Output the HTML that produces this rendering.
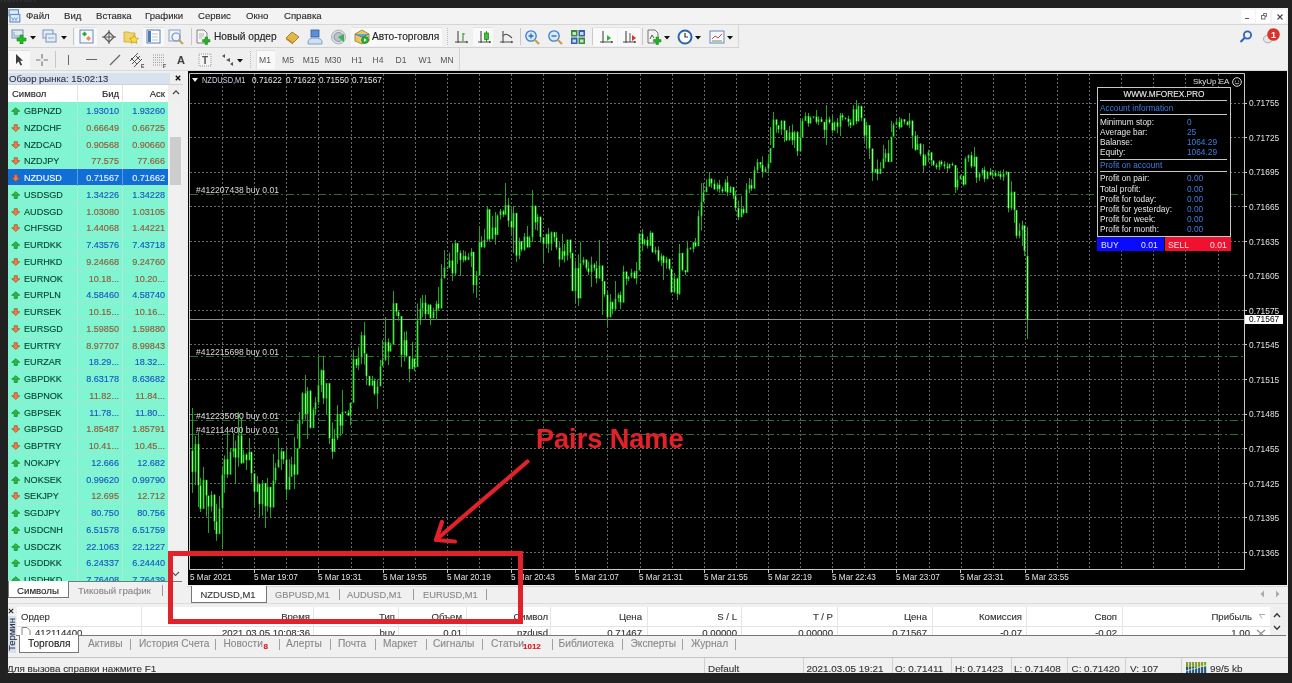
<!DOCTYPE html><html><head><meta charset="utf-8"><style>
html,body{margin:0;padding:0;}
body{width:1292px;height:683px;overflow:hidden;position:relative;background:#212121;font-family:"Liberation Sans", sans-serif;}
.t{position:absolute;white-space:nowrap;line-height:1;-webkit-text-stroke:0.12px currentColor;}
.b{position:absolute;}
</style></head><body><div style="position:absolute;left:0;top:0;width:1292px;height:683px;overflow:hidden;will-change:transform"><div class="t" style="left:0px;top:-6.66px;font-size:11px;color:#383838;">Контол</div><div class="b" style="left:8px;top:8px;width:1280px;height:665px;background:#f0f0f0"></div><div class="b" style="left:8px;top:8px;width:1280px;height:16px;background:#f3f3f3"></div><div class="b" style="left:8px;top:24px;width:1280px;height:1px;background:#d6d6d6"></div><svg class="b" style="left:8px;top:9px;" width="13" height="14" viewBox="0 0 13 14"><rect x="1" y="0.8" width="9.5" height="6" fill="#d6ecfb" stroke="#6d8fc8" stroke-width="1.2"/><rect x="2" y="5.5" width="9.8" height="7.5" fill="#d9f0ff" stroke="#6d8fc8" stroke-width="1.2"/><path d="M3.5 8L5 11.5L6.5 8.5L8 11.5L9.5 8" stroke="#7b9ad0" fill="none" stroke-width="0.9"/></svg><div class="t" style="left:26px;top:11.41px;font-size:9.6px;color:#2b2b2b;">Файл</div><div class="t" style="left:64px;top:11.41px;font-size:9.6px;color:#2b2b2b;">Вид</div><div class="t" style="left:96px;top:11.41px;font-size:9.6px;color:#2b2b2b;">Вставка</div><div class="t" style="left:145px;top:11.41px;font-size:9.6px;color:#2b2b2b;">Графики</div><div class="t" style="left:198px;top:11.41px;font-size:9.6px;color:#2b2b2b;">Сервис</div><div class="t" style="left:246px;top:11.41px;font-size:9.6px;color:#2b2b2b;">Окно</div><div class="t" style="left:284px;top:11.41px;font-size:9.6px;color:#2b2b2b;">Справка</div><div class="b" style="left:1241px;top:10px;width:14px;height:13px;background:#ffffff"></div><div class="b" style="left:1256px;top:10px;width:14px;height:13px;background:#ffffff"></div><div class="b" style="left:1272px;top:10px;width:14px;height:13px;background:#ffffff"></div><div class="b" style="left:1245px;top:18px;width:4px;height:1px;background:#555"></div><svg class="b" style="left:1260px;top:12px;" width="8" height="8" viewBox="0 0 8 8"><rect x="1.5" y="3.5" width="3.5" height="3.5" fill="none" stroke="#666" stroke-width="0.9"/><path d="M3.5 3.5 V1.5 H6.5 V4.5 H5" fill="none" stroke="#666" stroke-width="0.9"/></svg><svg class="b" style="left:1276px;top:13px;" width="8" height="8" viewBox="0 0 8 8"><path d="M1.5 1.5 L6.5 6.5 M6.5 1.5 L1.5 6.5" stroke="#444" stroke-width="1.1"/></svg><div class="b" style="left:8px;top:25px;width:1280px;height:22px;background:#f0f0f0"></div><div class="b" style="left:8px;top:47px;width:731px;height:1px;background:#d2d2d2"></div><div class="b" style="left:75px;top:27px;width:22px;height:19px;background:#f9f9f9;border-top:1px solid #e2e2e2;box-sizing:border-box"></div><div class="b" style="left:143px;top:27px;width:21px;height:19px;background:#f9f9f9;border-top:1px solid #e2e2e2;box-sizing:border-box"></div><div class="b" style="left:351px;top:27px;width:91px;height:19px;background:#f9f9f9;border-top:1px solid #e2e2e2;box-sizing:border-box"></div><div class="b" style="left:473px;top:27px;width:20px;height:19px;background:#f9f9f9;border-top:1px solid #e2e2e2;box-sizing:border-box"></div><div class="b" style="left:593px;top:27px;width:24px;height:19px;background:#f9f9f9;border-top:1px solid #e2e2e2;box-sizing:border-box"></div><div class="b" style="left:618px;top:27px;width:22px;height:19px;background:#f9f9f9;border-top:1px solid #e2e2e2;box-sizing:border-box"></div><div class="b" style="left:73px;top:28px;width:1px;height:17px;background:#c8c8c8"></div><div class="b" style="left:191px;top:28px;width:1px;height:17px;background:#c8c8c8"></div><div class="b" style="left:520px;top:28px;width:1px;height:17px;background:#c8c8c8"></div><div class="b" style="left:592px;top:28px;width:1px;height:17px;background:#c8c8c8"></div><div class="b" style="left:642px;top:28px;width:1px;height:17px;background:#c8c8c8"></div><div class="b" style="left:447px;top:28px;width:1px;height:17px;background:repeating-linear-gradient(#bbb 0 1px,transparent 1px 2px)"></div><div class="b" style="left:738px;top:25px;width:1px;height:22px;background:#d8d8d8"></div><svg class="b" style="left:11px;top:29px;" width="16" height="15" viewBox="0 0 16 15"><rect x="1" y="1" width="11" height="8" fill="#dfeaf5" stroke="#6e8db5"/><path d="M3 3v4h6" stroke="#6e8db5" fill="none" stroke-width="0.8"/><path d="M9 6h3v3h3v3h-3v3h-3v-3H6V9h3z" fill="#22bb22" stroke="#138a13" stroke-width="0.6"/></svg><svg class="b" style="left:30px;top:36px;" width="6" height="4" viewBox="0 0 6 4"><path d="M0 0 H6 L3 3.5 Z" fill="#111"/></svg><svg class="b" style="left:42px;top:29px;" width="16" height="15" viewBox="0 0 16 15"><rect x="1" y="1" width="10" height="8" fill="#e4edf7" stroke="#7795bd"/><rect x="4" y="5" width="10" height="8" fill="#e4edf7" stroke="#7795bd"/><path d="M6 9h6" stroke="#7795bd" stroke-width="0.8"/></svg><svg class="b" style="left:61px;top:36px;" width="6" height="4" viewBox="0 0 6 4"><path d="M0 0 H6 L3 3.5 Z" fill="#111"/></svg><svg class="b" style="left:79px;top:29px;" width="15" height="15" viewBox="0 0 15 15"><rect x="1" y="1" width="13" height="13" fill="#f4f8fc" stroke="#6b8ab5"/><path d="M5.5 2.5l2.5 2.5-2.5 2.5-2.5-2.5z" fill="#2faa3a"/><path d="M9.5 7l2.5 2.5-2.5 2.5-2.5-2.5z" fill="#ef8a55"/></svg><svg class="b" style="left:101px;top:29px;" width="16" height="16" viewBox="0 0 16 16"><path d="M8 3L13 8L8 13L3 8Z" fill="none" stroke="#555" stroke-width="1.1" stroke-linejoin="round"/><path d="M8 1v14M1 8h14" stroke="#555" stroke-width="1"/></svg><svg class="b" style="left:123px;top:29px;" width="17" height="16" viewBox="0 0 17 16"><path d="M1 3h5l1 1h5v9H1z" fill="#f1d56a" stroke="#c9a630" stroke-width="0.8"/><path d="M11 6l1.5 3 3 .4-2.2 2 .6 3-2.9-1.5-2.9 1.5.6-3-2.2-2 3-.4z" fill="#f7df3d" stroke="#b99a1a" stroke-width="0.7"/></svg><svg class="b" style="left:146px;top:29px;" width="15" height="15" viewBox="0 0 15 15"><rect x="1" y="1" width="13" height="13" fill="#fff" stroke="#5d7fb0"/><rect x="2" y="2" width="3" height="11" fill="#4f79b8"/><path d="M6 5h6M6 8h6M6 11h6" stroke="#9ab" stroke-width="0.7"/></svg><svg class="b" style="left:168px;top:29px;" width="17" height="17" viewBox="0 0 17 17"><rect x="1" y="1" width="11" height="11" fill="#eef3f8" stroke="#8aa2c2"/><circle cx="8" cy="8" r="4" fill="none" stroke="#7b93b8" stroke-width="1.2"/><path d="M11 11l4 4" stroke="#c9a14a" stroke-width="2"/></svg><svg class="b" style="left:195px;top:29px;" width="17" height="16" viewBox="0 0 17 16"><path d="M2 1h7l3 3v10H2z" fill="#f6f6f6" stroke="#777" stroke-width="0.9"/><path d="M4 5h5M4 7h5M4 9h3" stroke="#999" stroke-width="0.7"/><path d="M10 8h2.5v2.5H15v2.5h-2.5V15.5H10V13H7.5v-2.5H10z" fill="#21b321" stroke="#128a12" stroke-width="0.5"/></svg><div class="t" style="left:214px;top:31.97px;font-size:10.2px;color:#222;">Новый ордер</div><svg class="b" style="left:284px;top:29px;" width="17" height="16" viewBox="0 0 17 16"><path d="M2 9l6-6 7 5-6 6z" fill="#e3b743" stroke="#a0772a" stroke-width="0.9"/><path d="M2 9l7 5v1.5L2 10.5z" fill="#b9892d"/></svg><svg class="b" style="left:307px;top:29px;" width="17" height="16" viewBox="0 0 17 16"><rect x="4" y="1" width="8" height="7" fill="#5b8fd6" stroke="#2e5aa0" stroke-width="0.8"/><path d="M1 13c0-3 3-4 7-4s7 1 7 4v2H1z" fill="#cfe0f3" stroke="#6b8fbf" stroke-width="0.8"/></svg><svg class="b" style="left:330px;top:29px;" width="17" height="16" viewBox="0 0 17 16"><circle cx="8.5" cy="8" r="7" fill="#d8dde2" stroke="#9aa4ad" stroke-width="0.8"/><circle cx="8.5" cy="8" r="4.5" fill="#b9c3cc" stroke="#7d8893" stroke-width="0.8"/><path d="M8 8l6-3v8z" fill="#3fae4f"/></svg><svg class="b" style="left:353px;top:28px;" width="17" height="17" viewBox="0 0 17 17"><path d="M2 6l7-4 7 4v7l-7 3-7-3z" fill="#e8c95a" stroke="#8a7a3a" stroke-width="0.8"/><path d="M2 6l7 3 7-3" fill="#6aa6de" stroke="#3e6fa8" stroke-width="0.8"/><circle cx="12" cy="12" r="3.5" fill="#26b33a" stroke="#117a1f" stroke-width="0.6"/><path d="M11 10.3v3.4l2.6-1.7z" fill="#fff"/></svg><div class="t" style="left:372px;top:31.57px;font-size:10.2px;color:#222;">Авто-торговля</div><svg class="b" style="left:453px;top:29px;" width="17" height="16" viewBox="0 0 17 16"><path d="M5 2v12M2 13h13" stroke="#4a4a4a" stroke-width="1.1" fill="none"/><path d="M15 13l-2-1.3v2.6z" fill="#4a4a4a"/><path d="M10 4v8M10 5h1.8" stroke="#2a9a2a" stroke-width="1.1"/></svg><svg class="b" style="left:476px;top:29px;" width="17" height="16" viewBox="0 0 17 16"><path d="M5 2v12M2 13h13" stroke="#4a4a4a" stroke-width="1.1" fill="none"/><path d="M15 13l-2-1.3v2.6z" fill="#4a4a4a"/><path d="M10.5 2v11" stroke="#1c6a1c" stroke-width="0.8"/><rect x="8.5" y="4" width="4" height="6.5" fill="#35c935" stroke="#1c7a1c" stroke-width="0.7"/></svg><svg class="b" style="left:498px;top:29px;" width="17" height="16" viewBox="0 0 17 16"><path d="M5 2v12M2 13h13" stroke="#4a4a4a" stroke-width="1.1" fill="none"/><path d="M15 13l-2-1.3v2.6z" fill="#4a4a4a"/><path d="M5 7 Q8 3 14 9" stroke="#555" stroke-width="1.1" fill="none"/></svg><svg class="b" style="left:524px;top:29px;" width="17" height="17" viewBox="0 0 17 17"><circle cx="7" cy="7" r="5.2" fill="#d9ecfb" stroke="#3b7ccc" stroke-width="1.3"/><path d="M4.5 7h5M7 4.5v5" stroke="#2f6fc0" stroke-width="1.4"/><path d="M10.5 10.5l4.5 4.5" stroke="#c9a14a" stroke-width="2.2"/></svg><svg class="b" style="left:547px;top:29px;" width="17" height="17" viewBox="0 0 17 17"><circle cx="7" cy="7" r="5.2" fill="#d9ecfb" stroke="#3b7ccc" stroke-width="1.3"/><path d="M4.5 7h5" stroke="#2f6fc0" stroke-width="1.4"/><path d="M10.5 10.5l4.5 4.5" stroke="#c9a14a" stroke-width="2.2"/></svg><svg class="b" style="left:570px;top:29px;" width="16" height="16" viewBox="0 0 16 16"><rect x="1" y="1" width="6.5" height="6.5" fill="#3a8a3a"/><rect x="8.5" y="1" width="6.5" height="6.5" fill="#2f5fb0"/><rect x="1" y="8.5" width="6.5" height="6.5" fill="#2f5fb0"/><rect x="8.5" y="8.5" width="6.5" height="6.5" fill="#3a8a3a"/><rect x="2.5" y="3" width="3.5" height="3" fill="#bfe8bf"/><rect x="10" y="3" width="3.5" height="3" fill="#c8d8f4"/><rect x="2.5" y="10.5" width="3.5" height="3" fill="#c8d8f4"/><rect x="10" y="10.5" width="3.5" height="3" fill="#bfe8bf"/></svg><svg class="b" style="left:598px;top:29px;" width="17" height="16" viewBox="0 0 17 16"><path d="M5 2v12M2 13h13" stroke="#4a4a4a" stroke-width="1.1" fill="none"/><path d="M15 13l-2-1.3v2.6z" fill="#4a4a4a"/><path d="M9 6l4 3-4 3z" fill="#2fb52f"/></svg><svg class="b" style="left:621px;top:29px;" width="17" height="16" viewBox="0 0 17 16"><path d="M5 2v12M2 13h13" stroke="#4a4a4a" stroke-width="1.1" fill="none"/><path d="M15 13l-2-1.3v2.6z" fill="#4a4a4a"/><path d="M9 4v9" stroke="#555"/><path d="M11 6l4 3-4 3z" fill="#d9302a"/></svg><svg class="b" style="left:646px;top:29px;" width="17" height="17" viewBox="0 0 17 17"><path d="M2 1h7l3 3v10H2z" fill="#f4f4f4" stroke="#666" stroke-width="0.9"/><path d="M4 10l2-4 2 3" stroke="#444" fill="none" stroke-width="0.9"/><path d="M10 8h2.5v2.5H15v2.5h-2.5V15.5H10V13H7.5v-2.5H10z" fill="#21b321" stroke="#128a12" stroke-width="0.5"/></svg><svg class="b" style="left:664px;top:36px;" width="6" height="4" viewBox="0 0 6 4"><path d="M0 0 H6 L3 3.5 Z" fill="#111"/></svg><svg class="b" style="left:677px;top:29px;" width="16" height="16" viewBox="0 0 16 16"><circle cx="8" cy="8" r="6.5" fill="#fff" stroke="#2c63b5" stroke-width="2"/><path d="M8 4v4h3" stroke="#333" stroke-width="1.2" fill="none"/></svg><svg class="b" style="left:695px;top:36px;" width="6" height="4" viewBox="0 0 6 4"><path d="M0 0 H6 L3 3.5 Z" fill="#111"/></svg><svg class="b" style="left:709px;top:29px;" width="17" height="16" viewBox="0 0 17 16"><rect x="1" y="2" width="14" height="12" fill="#f4f7fb" stroke="#6b88b0"/><path d="M3 10l3-3 3 2 4-4" stroke="#d9302a" fill="none" stroke-width="0.9"/><path d="M3 12h10" stroke="#3b8a3b" stroke-width="0.8"/></svg><svg class="b" style="left:727px;top:36px;" width="6" height="4" viewBox="0 0 6 4"><path d="M0 0 H6 L3 3.5 Z" fill="#111"/></svg><svg class="b" style="left:1238px;top:29px;" width="16" height="16" viewBox="0 0 16 16"><circle cx="9.5" cy="6" r="3.6" fill="none" stroke="#2e62c0" stroke-width="1.8"/><path d="M7 8.5L2.5 13" stroke="#2e62c0" stroke-width="2.2"/></svg><svg class="b" style="left:1259px;top:26px;" width="24" height="20" viewBox="0 0 24 20"><ellipse cx="9" cy="13" rx="4.5" ry="3.8" fill="#e8e8e8" stroke="#aaa" stroke-width="1"/><circle cx="14.5" cy="8.5" r="6.3" fill="#d9342b"/><text x="14.5" y="12" font-size="9" font-weight="bold" text-anchor="middle" fill="#fff" font-family="Liberation Sans">1</text></svg><div class="b" style="left:8px;top:48px;width:1280px;height:22px;background:#f0f0f0"></div><div class="b" style="left:8px;top:48px;width:451px;height:22px;background:#efefef"></div><div class="b" style="left:459px;top:48px;width:1px;height:22px;background:#d3d3d3"></div><div class="b" style="left:8px;top:70px;width:1280px;height:1px;background:#dadada"></div><div class="b" style="left:9px;top:50px;width:21px;height:19px;background:#f9f9f9;border-top:1px solid #e0e0e0;box-sizing:border-box"></div><div class="b" style="left:256px;top:50px;width:19px;height:19px;background:#f9f9f9;border-top:1px solid #e0e0e0;border-left:1px solid #e0e0e0;box-sizing:border-box"></div><div class="b" style="left:55px;top:51px;width:1px;height:17px;background:#c8c8c8"></div><div class="b" style="left:250px;top:51px;width:1px;height:17px;background:repeating-linear-gradient(#bbb 0 1px,transparent 1px 2px)"></div><svg class="b" style="left:13px;top:53px;" width="12" height="14" viewBox="0 0 12 14"><path d="M3 1v10l2.5-2.5 2 4 1.6-.8-2-4H10z" fill="#3c3c3c"/></svg><svg class="b" style="left:35px;top:53px;" width="14" height="14" viewBox="0 0 14 14"><path d="M7 1v4.5M7 8.5V13M1 7h4.5M8.5 7H13" stroke="#777" stroke-width="1.2"/></svg><div class="b" style="left:68px;top:55px;width:1.3px;height:10px;background:#666"></div><div class="b" style="left:86px;top:59px;width:11px;height:1.3px;background:#666"></div><svg class="b" style="left:108px;top:53px;" width="14" height="14" viewBox="0 0 14 14"><path d="M2 12L12 2" stroke="#666" stroke-width="1.3"/></svg><svg class="b" style="left:129px;top:52px;" width="16" height="16" viewBox="0 0 16 16"><path d="M1 9l8-8M3 12l8-8M5 15l8-8M2 6l6 6M6 3l5 5" stroke="#555" stroke-width="1"/><text x="12" y="16" font-size="5" fill="#444" font-family="Liberation Sans" font-weight="bold">E</text></svg><svg class="b" style="left:152px;top:52px;" width="16" height="16" viewBox="0 0 16 16"><path d="M1 3h12M1 5.5h12M1 8h12M1 10.5h12M1 13h9" stroke="#777" stroke-width="0.7" stroke-dasharray="1 1"/><text x="11" y="16" font-size="5" fill="#444" font-family="Liberation Sans" font-weight="bold">F</text></svg><div class="t" style="left:177px;top:55.05px;font-size:11px;color:#444;font-weight:bold">A</div><svg class="b" style="left:198px;top:53px;" width="15" height="15" viewBox="0 0 15 15"><rect x="1" y="1" width="12" height="12" fill="#f4f4f4" stroke="#999" stroke-dasharray="1 1"/><text x="7" y="11" font-size="10" text-anchor="middle" fill="#555" font-family="Liberation Sans" font-weight="bold">T</text></svg><svg class="b" style="left:220px;top:53px;" width="16" height="14" viewBox="0 0 16 14"><path d="M2 3l3-2v4zM6 7l4-2v4zM10 11l3-2v4z" fill="#555"/></svg><svg class="b" style="left:237px;top:59px;" width="6" height="4" viewBox="0 0 6 4"><path d="M0 0 H6 L3 3.5 Z" fill="#111"/></svg><div class="t" style="left:250px;width:30px;text-align:center;top:56px;font-size:8.6px;color:#555;-webkit-text-stroke:0">M1</div><div class="t" style="left:273px;width:30px;text-align:center;top:56px;font-size:8.6px;color:#555;-webkit-text-stroke:0">M5</div><div class="t" style="left:296px;width:30px;text-align:center;top:56px;font-size:8.6px;color:#555;-webkit-text-stroke:0">M15</div><div class="t" style="left:318px;width:30px;text-align:center;top:56px;font-size:8.6px;color:#555;-webkit-text-stroke:0">M30</div><div class="t" style="left:342px;width:30px;text-align:center;top:56px;font-size:8.6px;color:#555;-webkit-text-stroke:0">H1</div><div class="t" style="left:363px;width:30px;text-align:center;top:56px;font-size:8.6px;color:#555;-webkit-text-stroke:0">H4</div><div class="t" style="left:386px;width:30px;text-align:center;top:56px;font-size:8.6px;color:#555;-webkit-text-stroke:0">D1</div><div class="t" style="left:410px;width:30px;text-align:center;top:56px;font-size:8.6px;color:#555;-webkit-text-stroke:0">W1</div><div class="t" style="left:432px;width:30px;text-align:center;top:56px;font-size:8.6px;color:#555;-webkit-text-stroke:0">MN</div><div class="b" style="left:8px;top:71px;width:180px;height:511px;background:#efefef"></div><div class="b" style="left:8px;top:73px;width:162px;height:11px;background:#d7e2ee"></div><div class="b" style="left:8px;top:84px;width:175px;height:1px;background:#d2d2d2"></div><div class="t" style="left:9px;top:73.90px;font-size:9.5px;color:#334;">Обзор рынка: 15:02:13</div><svg class="b" style="left:175px;top:74.5px;" width="6" height="6" viewBox="0 0 6 6"><path d="M0.8 0.8L5.2 5.2M5.2 0.8L0.8 5.2" stroke="#111" stroke-width="1.4"/></svg><div class="b" style="left:8px;top:85px;width:160px;height:17px;background:#ffffff"></div><div class="b" style="left:77px;top:85px;width:1px;height:17px;background:#e6e6e6"></div><div class="b" style="left:122px;top:85px;width:1px;height:17px;background:#e6e6e6"></div><div class="t" style="left:12px;top:89.40px;font-size:9.5px;color:#222;">Символ</div><div class="t" style="right:1173px;top:89.40px;font-size:9.5px;color:#222;">Бид</div><div class="t" style="right:1127px;top:89.40px;font-size:9.5px;color:#222;">Аск</div><svg class="b" style="left:171.5px;top:88.5px;" width="8" height="6" viewBox="0 0 8 6"><path d="M1 5L4 1.8L7 5" stroke="#444" stroke-width="1.2" fill="none"/></svg><div class="b" style="left:8px;top:102px;width:160px;height:480px;overflow:hidden"><div class="b" style="left:0;top:0.00px;width:160px;height:16.75px;background:#7ff5d1"></div><div class="b" style="left:0;top:16.15px;width:160px;height:0.6px;background:#9fe8cf"></div><div class="b" style="left:69px;top:0.00px;width:1px;height:16.75px;background:#a9eedb"></div><div class="b" style="left:114px;top:0.00px;width:1px;height:16.75px;background:#a9eedb"></div><svg class="b" style="left:3px;top:5.20px" width="9.5" height="8.6" viewBox="0 0 11 10"><path d="M5.5 0.8L10.2 5H7.3V8.6H3.7V5H0.8z" fill="#36b443" stroke="#15801f" stroke-width="0.8" stroke-linejoin="round"/></svg><div class="t" style="left:16px;top:5.10px;font-size:9.1px;color:#083d2a">GBPNZD</div><div class="t" style="right:49px;top:5.10px;font-size:9.1px;color:#1a52c0">1.93010</div><div class="t" style="right:3px;top:5.10px;font-size:9.1px;color:#1a52c0">1.93260</div><div class="b" style="left:0;top:16.75px;width:160px;height:16.75px;background:#7ff5d1"></div><div class="b" style="left:0;top:32.90px;width:160px;height:0.6px;background:#9fe8cf"></div><div class="b" style="left:69px;top:16.75px;width:1px;height:16.75px;background:#a9eedb"></div><div class="b" style="left:114px;top:16.75px;width:1px;height:16.75px;background:#a9eedb"></div><svg class="b" style="left:3px;top:21.95px" width="9.5" height="8.6" viewBox="0 0 11 10"><path d="M5.5 8.6L10.2 4.4H7.3V0.8H3.7V4.4H0.8z" fill="#f07c48" stroke="#a8461c" stroke-width="0.8" stroke-linejoin="round"/></svg><div class="t" style="left:16px;top:21.85px;font-size:9.1px;color:#083d2a">NZDCHF</div><div class="t" style="right:49px;top:21.85px;font-size:9.1px;color:#935633">0.66649</div><div class="t" style="right:3px;top:21.85px;font-size:9.1px;color:#935633">0.66725</div><div class="b" style="left:0;top:33.50px;width:160px;height:16.75px;background:#7ff5d1"></div><div class="b" style="left:0;top:49.65px;width:160px;height:0.6px;background:#9fe8cf"></div><div class="b" style="left:69px;top:33.50px;width:1px;height:16.75px;background:#a9eedb"></div><div class="b" style="left:114px;top:33.50px;width:1px;height:16.75px;background:#a9eedb"></div><svg class="b" style="left:3px;top:38.70px" width="9.5" height="8.6" viewBox="0 0 11 10"><path d="M5.5 8.6L10.2 4.4H7.3V0.8H3.7V4.4H0.8z" fill="#f07c48" stroke="#a8461c" stroke-width="0.8" stroke-linejoin="round"/></svg><div class="t" style="left:16px;top:38.60px;font-size:9.1px;color:#083d2a">NZDCAD</div><div class="t" style="right:49px;top:38.60px;font-size:9.1px;color:#935633">0.90568</div><div class="t" style="right:3px;top:38.60px;font-size:9.1px;color:#935633">0.90660</div><div class="b" style="left:0;top:50.25px;width:160px;height:16.75px;background:#7ff5d1"></div><div class="b" style="left:0;top:66.40px;width:160px;height:0.6px;background:#9fe8cf"></div><div class="b" style="left:69px;top:50.25px;width:1px;height:16.75px;background:#a9eedb"></div><div class="b" style="left:114px;top:50.25px;width:1px;height:16.75px;background:#a9eedb"></div><svg class="b" style="left:3px;top:55.45px" width="9.5" height="8.6" viewBox="0 0 11 10"><path d="M5.5 8.6L10.2 4.4H7.3V0.8H3.7V4.4H0.8z" fill="#f07c48" stroke="#a8461c" stroke-width="0.8" stroke-linejoin="round"/></svg><div class="t" style="left:16px;top:55.35px;font-size:9.1px;color:#083d2a">NZDJPY</div><div class="t" style="right:49px;top:55.35px;font-size:9.1px;color:#935633">77.575</div><div class="t" style="right:3px;top:55.35px;font-size:9.1px;color:#935633">77.666</div><div class="b" style="left:0;top:67.00px;width:160px;height:16.75px;background:#0f6fd6"></div><div class="b" style="left:0;top:83.15px;width:160px;height:0.6px;background:#9fe8cf"></div><div class="b" style="left:69px;top:67.00px;width:1px;height:16.75px;background:#5a9ee6"></div><div class="b" style="left:114px;top:67.00px;width:1px;height:16.75px;background:#5a9ee6"></div><svg class="b" style="left:3px;top:72.20px" width="9.5" height="8.6" viewBox="0 0 11 10"><path d="M5.5 8.6L10.2 4.4H7.3V0.8H3.7V4.4H0.8z" fill="#f07c48" stroke="#a8461c" stroke-width="0.8" stroke-linejoin="round"/></svg><div class="t" style="left:16px;top:72.10px;font-size:9.1px;color:#ffffff">NZDUSD</div><div class="t" style="right:49px;top:72.10px;font-size:9.1px;color:#eaf2ff">0.71567</div><div class="t" style="right:3px;top:72.10px;font-size:9.1px;color:#eaf2ff">0.71662</div><div class="b" style="left:0;top:83.75px;width:160px;height:16.75px;background:#7ff5d1"></div><div class="b" style="left:0;top:99.90px;width:160px;height:0.6px;background:#9fe8cf"></div><div class="b" style="left:69px;top:83.75px;width:1px;height:16.75px;background:#a9eedb"></div><div class="b" style="left:114px;top:83.75px;width:1px;height:16.75px;background:#a9eedb"></div><svg class="b" style="left:3px;top:88.95px" width="9.5" height="8.6" viewBox="0 0 11 10"><path d="M5.5 0.8L10.2 5H7.3V8.6H3.7V5H0.8z" fill="#36b443" stroke="#15801f" stroke-width="0.8" stroke-linejoin="round"/></svg><div class="t" style="left:16px;top:88.85px;font-size:9.1px;color:#083d2a">USDSGD</div><div class="t" style="right:49px;top:88.85px;font-size:9.1px;color:#1a52c0">1.34226</div><div class="t" style="right:3px;top:88.85px;font-size:9.1px;color:#1a52c0">1.34228</div><div class="b" style="left:0;top:100.50px;width:160px;height:16.75px;background:#7ff5d1"></div><div class="b" style="left:0;top:116.65px;width:160px;height:0.6px;background:#9fe8cf"></div><div class="b" style="left:69px;top:100.50px;width:1px;height:16.75px;background:#a9eedb"></div><div class="b" style="left:114px;top:100.50px;width:1px;height:16.75px;background:#a9eedb"></div><svg class="b" style="left:3px;top:105.70px" width="9.5" height="8.6" viewBox="0 0 11 10"><path d="M5.5 8.6L10.2 4.4H7.3V0.8H3.7V4.4H0.8z" fill="#f07c48" stroke="#a8461c" stroke-width="0.8" stroke-linejoin="round"/></svg><div class="t" style="left:16px;top:105.60px;font-size:9.1px;color:#083d2a">AUDSGD</div><div class="t" style="right:49px;top:105.60px;font-size:9.1px;color:#935633">1.03080</div><div class="t" style="right:3px;top:105.60px;font-size:9.1px;color:#935633">1.03105</div><div class="b" style="left:0;top:117.25px;width:160px;height:16.75px;background:#7ff5d1"></div><div class="b" style="left:0;top:133.40px;width:160px;height:0.6px;background:#9fe8cf"></div><div class="b" style="left:69px;top:117.25px;width:1px;height:16.75px;background:#a9eedb"></div><div class="b" style="left:114px;top:117.25px;width:1px;height:16.75px;background:#a9eedb"></div><svg class="b" style="left:3px;top:122.45px" width="9.5" height="8.6" viewBox="0 0 11 10"><path d="M5.5 8.6L10.2 4.4H7.3V0.8H3.7V4.4H0.8z" fill="#f07c48" stroke="#a8461c" stroke-width="0.8" stroke-linejoin="round"/></svg><div class="t" style="left:16px;top:122.35px;font-size:9.1px;color:#083d2a">CHFSGD</div><div class="t" style="right:49px;top:122.35px;font-size:9.1px;color:#935633">1.44068</div><div class="t" style="right:3px;top:122.35px;font-size:9.1px;color:#935633">1.44221</div><div class="b" style="left:0;top:134.00px;width:160px;height:16.75px;background:#7ff5d1"></div><div class="b" style="left:0;top:150.15px;width:160px;height:0.6px;background:#9fe8cf"></div><div class="b" style="left:69px;top:134.00px;width:1px;height:16.75px;background:#a9eedb"></div><div class="b" style="left:114px;top:134.00px;width:1px;height:16.75px;background:#a9eedb"></div><svg class="b" style="left:3px;top:139.20px" width="9.5" height="8.6" viewBox="0 0 11 10"><path d="M5.5 0.8L10.2 5H7.3V8.6H3.7V5H0.8z" fill="#36b443" stroke="#15801f" stroke-width="0.8" stroke-linejoin="round"/></svg><div class="t" style="left:16px;top:139.10px;font-size:9.1px;color:#083d2a">EURDKK</div><div class="t" style="right:49px;top:139.10px;font-size:9.1px;color:#1a52c0">7.43576</div><div class="t" style="right:3px;top:139.10px;font-size:9.1px;color:#1a52c0">7.43718</div><div class="b" style="left:0;top:150.75px;width:160px;height:16.75px;background:#7ff5d1"></div><div class="b" style="left:0;top:166.90px;width:160px;height:0.6px;background:#9fe8cf"></div><div class="b" style="left:69px;top:150.75px;width:1px;height:16.75px;background:#a9eedb"></div><div class="b" style="left:114px;top:150.75px;width:1px;height:16.75px;background:#a9eedb"></div><svg class="b" style="left:3px;top:155.95px" width="9.5" height="8.6" viewBox="0 0 11 10"><path d="M5.5 8.6L10.2 4.4H7.3V0.8H3.7V4.4H0.8z" fill="#f07c48" stroke="#a8461c" stroke-width="0.8" stroke-linejoin="round"/></svg><div class="t" style="left:16px;top:155.85px;font-size:9.1px;color:#083d2a">EURHKD</div><div class="t" style="right:49px;top:155.85px;font-size:9.1px;color:#935633">9.24668</div><div class="t" style="right:3px;top:155.85px;font-size:9.1px;color:#935633">9.24760</div><div class="b" style="left:0;top:167.50px;width:160px;height:16.75px;background:#7ff5d1"></div><div class="b" style="left:0;top:183.65px;width:160px;height:0.6px;background:#9fe8cf"></div><div class="b" style="left:69px;top:167.50px;width:1px;height:16.75px;background:#a9eedb"></div><div class="b" style="left:114px;top:167.50px;width:1px;height:16.75px;background:#a9eedb"></div><svg class="b" style="left:3px;top:172.70px" width="9.5" height="8.6" viewBox="0 0 11 10"><path d="M5.5 8.6L10.2 4.4H7.3V0.8H3.7V4.4H0.8z" fill="#f07c48" stroke="#a8461c" stroke-width="0.8" stroke-linejoin="round"/></svg><div class="t" style="left:16px;top:172.60px;font-size:9.1px;color:#083d2a">EURNOK</div><div class="t" style="right:49px;top:172.60px;font-size:9.1px;color:#935633">10.18...</div><div class="t" style="right:3px;top:172.60px;font-size:9.1px;color:#935633">10.20...</div><div class="b" style="left:0;top:184.25px;width:160px;height:16.75px;background:#7ff5d1"></div><div class="b" style="left:0;top:200.40px;width:160px;height:0.6px;background:#9fe8cf"></div><div class="b" style="left:69px;top:184.25px;width:1px;height:16.75px;background:#a9eedb"></div><div class="b" style="left:114px;top:184.25px;width:1px;height:16.75px;background:#a9eedb"></div><svg class="b" style="left:3px;top:189.45px" width="9.5" height="8.6" viewBox="0 0 11 10"><path d="M5.5 0.8L10.2 5H7.3V8.6H3.7V5H0.8z" fill="#36b443" stroke="#15801f" stroke-width="0.8" stroke-linejoin="round"/></svg><div class="t" style="left:16px;top:189.35px;font-size:9.1px;color:#083d2a">EURPLN</div><div class="t" style="right:49px;top:189.35px;font-size:9.1px;color:#1a52c0">4.58460</div><div class="t" style="right:3px;top:189.35px;font-size:9.1px;color:#1a52c0">4.58740</div><div class="b" style="left:0;top:201.00px;width:160px;height:16.75px;background:#7ff5d1"></div><div class="b" style="left:0;top:217.15px;width:160px;height:0.6px;background:#9fe8cf"></div><div class="b" style="left:69px;top:201.00px;width:1px;height:16.75px;background:#a9eedb"></div><div class="b" style="left:114px;top:201.00px;width:1px;height:16.75px;background:#a9eedb"></div><svg class="b" style="left:3px;top:206.20px" width="9.5" height="8.6" viewBox="0 0 11 10"><path d="M5.5 8.6L10.2 4.4H7.3V0.8H3.7V4.4H0.8z" fill="#f07c48" stroke="#a8461c" stroke-width="0.8" stroke-linejoin="round"/></svg><div class="t" style="left:16px;top:206.10px;font-size:9.1px;color:#083d2a">EURSEK</div><div class="t" style="right:49px;top:206.10px;font-size:9.1px;color:#935633">10.15...</div><div class="t" style="right:3px;top:206.10px;font-size:9.1px;color:#935633">10.16...</div><div class="b" style="left:0;top:217.75px;width:160px;height:16.75px;background:#7ff5d1"></div><div class="b" style="left:0;top:233.90px;width:160px;height:0.6px;background:#9fe8cf"></div><div class="b" style="left:69px;top:217.75px;width:1px;height:16.75px;background:#a9eedb"></div><div class="b" style="left:114px;top:217.75px;width:1px;height:16.75px;background:#a9eedb"></div><svg class="b" style="left:3px;top:222.95px" width="9.5" height="8.6" viewBox="0 0 11 10"><path d="M5.5 8.6L10.2 4.4H7.3V0.8H3.7V4.4H0.8z" fill="#f07c48" stroke="#a8461c" stroke-width="0.8" stroke-linejoin="round"/></svg><div class="t" style="left:16px;top:222.85px;font-size:9.1px;color:#083d2a">EURSGD</div><div class="t" style="right:49px;top:222.85px;font-size:9.1px;color:#935633">1.59850</div><div class="t" style="right:3px;top:222.85px;font-size:9.1px;color:#935633">1.59880</div><div class="b" style="left:0;top:234.50px;width:160px;height:16.75px;background:#7ff5d1"></div><div class="b" style="left:0;top:250.65px;width:160px;height:0.6px;background:#9fe8cf"></div><div class="b" style="left:69px;top:234.50px;width:1px;height:16.75px;background:#a9eedb"></div><div class="b" style="left:114px;top:234.50px;width:1px;height:16.75px;background:#a9eedb"></div><svg class="b" style="left:3px;top:239.70px" width="9.5" height="8.6" viewBox="0 0 11 10"><path d="M5.5 8.6L10.2 4.4H7.3V0.8H3.7V4.4H0.8z" fill="#f07c48" stroke="#a8461c" stroke-width="0.8" stroke-linejoin="round"/></svg><div class="t" style="left:16px;top:239.60px;font-size:9.1px;color:#083d2a">EURTRY</div><div class="t" style="right:49px;top:239.60px;font-size:9.1px;color:#935633">8.97707</div><div class="t" style="right:3px;top:239.60px;font-size:9.1px;color:#935633">8.99843</div><div class="b" style="left:0;top:251.25px;width:160px;height:16.75px;background:#7ff5d1"></div><div class="b" style="left:0;top:267.40px;width:160px;height:0.6px;background:#9fe8cf"></div><div class="b" style="left:69px;top:251.25px;width:1px;height:16.75px;background:#a9eedb"></div><div class="b" style="left:114px;top:251.25px;width:1px;height:16.75px;background:#a9eedb"></div><svg class="b" style="left:3px;top:256.45px" width="9.5" height="8.6" viewBox="0 0 11 10"><path d="M5.5 0.8L10.2 5H7.3V8.6H3.7V5H0.8z" fill="#36b443" stroke="#15801f" stroke-width="0.8" stroke-linejoin="round"/></svg><div class="t" style="left:16px;top:256.35px;font-size:9.1px;color:#083d2a">EURZAR</div><div class="t" style="right:49px;top:256.35px;font-size:9.1px;color:#1a52c0">18.29...</div><div class="t" style="right:3px;top:256.35px;font-size:9.1px;color:#1a52c0">18.32...</div><div class="b" style="left:0;top:268.00px;width:160px;height:16.75px;background:#7ff5d1"></div><div class="b" style="left:0;top:284.15px;width:160px;height:0.6px;background:#9fe8cf"></div><div class="b" style="left:69px;top:268.00px;width:1px;height:16.75px;background:#a9eedb"></div><div class="b" style="left:114px;top:268.00px;width:1px;height:16.75px;background:#a9eedb"></div><svg class="b" style="left:3px;top:273.20px" width="9.5" height="8.6" viewBox="0 0 11 10"><path d="M5.5 0.8L10.2 5H7.3V8.6H3.7V5H0.8z" fill="#36b443" stroke="#15801f" stroke-width="0.8" stroke-linejoin="round"/></svg><div class="t" style="left:16px;top:273.10px;font-size:9.1px;color:#083d2a">GBPDKK</div><div class="t" style="right:49px;top:273.10px;font-size:9.1px;color:#1a52c0">8.63178</div><div class="t" style="right:3px;top:273.10px;font-size:9.1px;color:#1a52c0">8.63682</div><div class="b" style="left:0;top:284.75px;width:160px;height:16.75px;background:#7ff5d1"></div><div class="b" style="left:0;top:300.90px;width:160px;height:0.6px;background:#9fe8cf"></div><div class="b" style="left:69px;top:284.75px;width:1px;height:16.75px;background:#a9eedb"></div><div class="b" style="left:114px;top:284.75px;width:1px;height:16.75px;background:#a9eedb"></div><svg class="b" style="left:3px;top:289.95px" width="9.5" height="8.6" viewBox="0 0 11 10"><path d="M5.5 8.6L10.2 4.4H7.3V0.8H3.7V4.4H0.8z" fill="#f07c48" stroke="#a8461c" stroke-width="0.8" stroke-linejoin="round"/></svg><div class="t" style="left:16px;top:289.85px;font-size:9.1px;color:#083d2a">GBPNOK</div><div class="t" style="right:49px;top:289.85px;font-size:9.1px;color:#935633">11.82...</div><div class="t" style="right:3px;top:289.85px;font-size:9.1px;color:#935633">11.84...</div><div class="b" style="left:0;top:301.50px;width:160px;height:16.75px;background:#7ff5d1"></div><div class="b" style="left:0;top:317.65px;width:160px;height:0.6px;background:#9fe8cf"></div><div class="b" style="left:69px;top:301.50px;width:1px;height:16.75px;background:#a9eedb"></div><div class="b" style="left:114px;top:301.50px;width:1px;height:16.75px;background:#a9eedb"></div><svg class="b" style="left:3px;top:306.70px" width="9.5" height="8.6" viewBox="0 0 11 10"><path d="M5.5 0.8L10.2 5H7.3V8.6H3.7V5H0.8z" fill="#36b443" stroke="#15801f" stroke-width="0.8" stroke-linejoin="round"/></svg><div class="t" style="left:16px;top:306.60px;font-size:9.1px;color:#083d2a">GBPSEK</div><div class="t" style="right:49px;top:306.60px;font-size:9.1px;color:#1a52c0">11.78...</div><div class="t" style="right:3px;top:306.60px;font-size:9.1px;color:#1a52c0">11.80...</div><div class="b" style="left:0;top:318.25px;width:160px;height:16.75px;background:#7ff5d1"></div><div class="b" style="left:0;top:334.40px;width:160px;height:0.6px;background:#9fe8cf"></div><div class="b" style="left:69px;top:318.25px;width:1px;height:16.75px;background:#a9eedb"></div><div class="b" style="left:114px;top:318.25px;width:1px;height:16.75px;background:#a9eedb"></div><svg class="b" style="left:3px;top:323.45px" width="9.5" height="8.6" viewBox="0 0 11 10"><path d="M5.5 8.6L10.2 4.4H7.3V0.8H3.7V4.4H0.8z" fill="#f07c48" stroke="#a8461c" stroke-width="0.8" stroke-linejoin="round"/></svg><div class="t" style="left:16px;top:323.35px;font-size:9.1px;color:#083d2a">GBPSGD</div><div class="t" style="right:49px;top:323.35px;font-size:9.1px;color:#935633">1.85487</div><div class="t" style="right:3px;top:323.35px;font-size:9.1px;color:#935633">1.85791</div><div class="b" style="left:0;top:335.00px;width:160px;height:16.75px;background:#7ff5d1"></div><div class="b" style="left:0;top:351.15px;width:160px;height:0.6px;background:#9fe8cf"></div><div class="b" style="left:69px;top:335.00px;width:1px;height:16.75px;background:#a9eedb"></div><div class="b" style="left:114px;top:335.00px;width:1px;height:16.75px;background:#a9eedb"></div><svg class="b" style="left:3px;top:340.20px" width="9.5" height="8.6" viewBox="0 0 11 10"><path d="M5.5 8.6L10.2 4.4H7.3V0.8H3.7V4.4H0.8z" fill="#f07c48" stroke="#a8461c" stroke-width="0.8" stroke-linejoin="round"/></svg><div class="t" style="left:16px;top:340.10px;font-size:9.1px;color:#083d2a">GBPTRY</div><div class="t" style="right:49px;top:340.10px;font-size:9.1px;color:#935633">10.41...</div><div class="t" style="right:3px;top:340.10px;font-size:9.1px;color:#935633">10.45...</div><div class="b" style="left:0;top:351.75px;width:160px;height:16.75px;background:#7ff5d1"></div><div class="b" style="left:0;top:367.90px;width:160px;height:0.6px;background:#9fe8cf"></div><div class="b" style="left:69px;top:351.75px;width:1px;height:16.75px;background:#a9eedb"></div><div class="b" style="left:114px;top:351.75px;width:1px;height:16.75px;background:#a9eedb"></div><svg class="b" style="left:3px;top:356.95px" width="9.5" height="8.6" viewBox="0 0 11 10"><path d="M5.5 0.8L10.2 5H7.3V8.6H3.7V5H0.8z" fill="#36b443" stroke="#15801f" stroke-width="0.8" stroke-linejoin="round"/></svg><div class="t" style="left:16px;top:356.85px;font-size:9.1px;color:#083d2a">NOKJPY</div><div class="t" style="right:49px;top:356.85px;font-size:9.1px;color:#1a52c0">12.666</div><div class="t" style="right:3px;top:356.85px;font-size:9.1px;color:#1a52c0">12.682</div><div class="b" style="left:0;top:368.50px;width:160px;height:16.75px;background:#7ff5d1"></div><div class="b" style="left:0;top:384.65px;width:160px;height:0.6px;background:#9fe8cf"></div><div class="b" style="left:69px;top:368.50px;width:1px;height:16.75px;background:#a9eedb"></div><div class="b" style="left:114px;top:368.50px;width:1px;height:16.75px;background:#a9eedb"></div><svg class="b" style="left:3px;top:373.70px" width="9.5" height="8.6" viewBox="0 0 11 10"><path d="M5.5 0.8L10.2 5H7.3V8.6H3.7V5H0.8z" fill="#36b443" stroke="#15801f" stroke-width="0.8" stroke-linejoin="round"/></svg><div class="t" style="left:16px;top:373.60px;font-size:9.1px;color:#083d2a">NOKSEK</div><div class="t" style="right:49px;top:373.60px;font-size:9.1px;color:#1a52c0">0.99620</div><div class="t" style="right:3px;top:373.60px;font-size:9.1px;color:#1a52c0">0.99790</div><div class="b" style="left:0;top:385.25px;width:160px;height:16.75px;background:#7ff5d1"></div><div class="b" style="left:0;top:401.40px;width:160px;height:0.6px;background:#9fe8cf"></div><div class="b" style="left:69px;top:385.25px;width:1px;height:16.75px;background:#a9eedb"></div><div class="b" style="left:114px;top:385.25px;width:1px;height:16.75px;background:#a9eedb"></div><svg class="b" style="left:3px;top:390.45px" width="9.5" height="8.6" viewBox="0 0 11 10"><path d="M5.5 8.6L10.2 4.4H7.3V0.8H3.7V4.4H0.8z" fill="#f07c48" stroke="#a8461c" stroke-width="0.8" stroke-linejoin="round"/></svg><div class="t" style="left:16px;top:390.35px;font-size:9.1px;color:#083d2a">SEKJPY</div><div class="t" style="right:49px;top:390.35px;font-size:9.1px;color:#935633">12.695</div><div class="t" style="right:3px;top:390.35px;font-size:9.1px;color:#935633">12.712</div><div class="b" style="left:0;top:402.00px;width:160px;height:16.75px;background:#7ff5d1"></div><div class="b" style="left:0;top:418.15px;width:160px;height:0.6px;background:#9fe8cf"></div><div class="b" style="left:69px;top:402.00px;width:1px;height:16.75px;background:#a9eedb"></div><div class="b" style="left:114px;top:402.00px;width:1px;height:16.75px;background:#a9eedb"></div><svg class="b" style="left:3px;top:407.20px" width="9.5" height="8.6" viewBox="0 0 11 10"><path d="M5.5 0.8L10.2 5H7.3V8.6H3.7V5H0.8z" fill="#36b443" stroke="#15801f" stroke-width="0.8" stroke-linejoin="round"/></svg><div class="t" style="left:16px;top:407.10px;font-size:9.1px;color:#083d2a">SGDJPY</div><div class="t" style="right:49px;top:407.10px;font-size:9.1px;color:#1a52c0">80.750</div><div class="t" style="right:3px;top:407.10px;font-size:9.1px;color:#1a52c0">80.756</div><div class="b" style="left:0;top:418.75px;width:160px;height:16.75px;background:#7ff5d1"></div><div class="b" style="left:0;top:434.90px;width:160px;height:0.6px;background:#9fe8cf"></div><div class="b" style="left:69px;top:418.75px;width:1px;height:16.75px;background:#a9eedb"></div><div class="b" style="left:114px;top:418.75px;width:1px;height:16.75px;background:#a9eedb"></div><svg class="b" style="left:3px;top:423.95px" width="9.5" height="8.6" viewBox="0 0 11 10"><path d="M5.5 0.8L10.2 5H7.3V8.6H3.7V5H0.8z" fill="#36b443" stroke="#15801f" stroke-width="0.8" stroke-linejoin="round"/></svg><div class="t" style="left:16px;top:423.85px;font-size:9.1px;color:#083d2a">USDCNH</div><div class="t" style="right:49px;top:423.85px;font-size:9.1px;color:#1a52c0">6.51578</div><div class="t" style="right:3px;top:423.85px;font-size:9.1px;color:#1a52c0">6.51759</div><div class="b" style="left:0;top:435.50px;width:160px;height:16.75px;background:#7ff5d1"></div><div class="b" style="left:0;top:451.65px;width:160px;height:0.6px;background:#9fe8cf"></div><div class="b" style="left:69px;top:435.50px;width:1px;height:16.75px;background:#a9eedb"></div><div class="b" style="left:114px;top:435.50px;width:1px;height:16.75px;background:#a9eedb"></div><svg class="b" style="left:3px;top:440.70px" width="9.5" height="8.6" viewBox="0 0 11 10"><path d="M5.5 0.8L10.2 5H7.3V8.6H3.7V5H0.8z" fill="#36b443" stroke="#15801f" stroke-width="0.8" stroke-linejoin="round"/></svg><div class="t" style="left:16px;top:440.60px;font-size:9.1px;color:#083d2a">USDCZK</div><div class="t" style="right:49px;top:440.60px;font-size:9.1px;color:#1a52c0">22.1063</div><div class="t" style="right:3px;top:440.60px;font-size:9.1px;color:#1a52c0">22.1227</div><div class="b" style="left:0;top:452.25px;width:160px;height:16.75px;background:#7ff5d1"></div><div class="b" style="left:0;top:468.40px;width:160px;height:0.6px;background:#9fe8cf"></div><div class="b" style="left:69px;top:452.25px;width:1px;height:16.75px;background:#a9eedb"></div><div class="b" style="left:114px;top:452.25px;width:1px;height:16.75px;background:#a9eedb"></div><svg class="b" style="left:3px;top:457.45px" width="9.5" height="8.6" viewBox="0 0 11 10"><path d="M5.5 0.8L10.2 5H7.3V8.6H3.7V5H0.8z" fill="#36b443" stroke="#15801f" stroke-width="0.8" stroke-linejoin="round"/></svg><div class="t" style="left:16px;top:457.35px;font-size:9.1px;color:#083d2a">USDDKK</div><div class="t" style="right:49px;top:457.35px;font-size:9.1px;color:#1a52c0">6.24337</div><div class="t" style="right:3px;top:457.35px;font-size:9.1px;color:#1a52c0">6.24440</div><div class="b" style="left:0;top:469.00px;width:160px;height:16.75px;background:#7ff5d1"></div><div class="b" style="left:0;top:485.15px;width:160px;height:0.6px;background:#9fe8cf"></div><div class="b" style="left:69px;top:469.00px;width:1px;height:16.75px;background:#a9eedb"></div><div class="b" style="left:114px;top:469.00px;width:1px;height:16.75px;background:#a9eedb"></div><svg class="b" style="left:3px;top:474.20px" width="9.5" height="8.6" viewBox="0 0 11 10"><path d="M5.5 0.8L10.2 5H7.3V8.6H3.7V5H0.8z" fill="#36b443" stroke="#15801f" stroke-width="0.8" stroke-linejoin="round"/></svg><div class="t" style="left:16px;top:474.10px;font-size:9.1px;color:#083d2a">USDHKD</div><div class="t" style="right:49px;top:474.10px;font-size:9.1px;color:#1a52c0">7.76408</div><div class="t" style="right:3px;top:474.10px;font-size:9.1px;color:#1a52c0">7.76439</div></div><div class="b" style="left:168px;top:102px;width:14px;height:480px;background:#f0f0f0"></div><div class="b" style="left:170px;top:137px;width:11px;height:48px;background:#cdcdcd"></div><svg class="b" style="left:171px;top:571px;" width="9" height="6" viewBox="0 0 9 6"><path d="M1 1L4.5 4.5L8 1" stroke="#555" stroke-width="1.1" fill="none"/></svg><div class="b" style="left:8px;top:582px;width:174px;height:18px;background:#f0f0f0"></div><div class="b" style="left:8px;top:581px;width:174px;height:1px;background:#777"></div><div class="b" style="left:8px;top:581px;width:61px;height:17px;background:#ffffff;border:1px solid #777;border-top:none;box-sizing:border-box"></div><div class="t" style="left:17px;top:585.72px;font-size:9.7px;color:#222;">Символы</div><div class="t" style="left:78px;top:585.72px;font-size:9.7px;color:#888;">Тиковый график</div><div class="b" style="left:162px;top:585px;width:1px;height:11px;background:#999"></div><div class="b" style="left:188px;top:71px;width:1098.5px;height:513.5px;background:#000"></div><svg class="b" style="left:0;top:0" width="1292" height="683" viewBox="0 0 1292 683"><line x1="222.5" y1="74" x2="222.5" y2="569" stroke="#686868" stroke-dasharray="2 2"/><line x1="254.5" y1="74" x2="254.5" y2="569" stroke="#686868" stroke-dasharray="2 2"/><line x1="286.5" y1="74" x2="286.5" y2="569" stroke="#686868" stroke-dasharray="2 2"/><line x1="318.5" y1="74" x2="318.5" y2="569" stroke="#686868" stroke-dasharray="2 2"/><line x1="351.5" y1="74" x2="351.5" y2="569" stroke="#686868" stroke-dasharray="2 2"/><line x1="383.5" y1="74" x2="383.5" y2="569" stroke="#686868" stroke-dasharray="2 2"/><line x1="415.5" y1="74" x2="415.5" y2="569" stroke="#686868" stroke-dasharray="2 2"/><line x1="447.5" y1="74" x2="447.5" y2="569" stroke="#686868" stroke-dasharray="2 2"/><line x1="479.5" y1="74" x2="479.5" y2="569" stroke="#686868" stroke-dasharray="2 2"/><line x1="511.5" y1="74" x2="511.5" y2="569" stroke="#686868" stroke-dasharray="2 2"/><line x1="543.5" y1="74" x2="543.5" y2="569" stroke="#686868" stroke-dasharray="2 2"/><line x1="575.5" y1="74" x2="575.5" y2="569" stroke="#686868" stroke-dasharray="2 2"/><line x1="607.5" y1="74" x2="607.5" y2="569" stroke="#686868" stroke-dasharray="2 2"/><line x1="640.5" y1="74" x2="640.5" y2="569" stroke="#686868" stroke-dasharray="2 2"/><line x1="672.5" y1="74" x2="672.5" y2="569" stroke="#686868" stroke-dasharray="2 2"/><line x1="704.5" y1="74" x2="704.5" y2="569" stroke="#686868" stroke-dasharray="2 2"/><line x1="736.5" y1="74" x2="736.5" y2="569" stroke="#686868" stroke-dasharray="2 2"/><line x1="768.5" y1="74" x2="768.5" y2="569" stroke="#686868" stroke-dasharray="2 2"/><line x1="800.5" y1="74" x2="800.5" y2="569" stroke="#686868" stroke-dasharray="2 2"/><line x1="832.5" y1="74" x2="832.5" y2="569" stroke="#686868" stroke-dasharray="2 2"/><line x1="864.5" y1="74" x2="864.5" y2="569" stroke="#686868" stroke-dasharray="2 2"/><line x1="896.5" y1="74" x2="896.5" y2="569" stroke="#686868" stroke-dasharray="2 2"/><line x1="929.5" y1="74" x2="929.5" y2="569" stroke="#686868" stroke-dasharray="2 2"/><line x1="961.5" y1="74" x2="961.5" y2="569" stroke="#686868" stroke-dasharray="2 2"/><line x1="993.5" y1="74" x2="993.5" y2="569" stroke="#686868" stroke-dasharray="2 2"/><line x1="1025.5" y1="74" x2="1025.5" y2="569" stroke="#686868" stroke-dasharray="2 2"/><line x1="1057.5" y1="74" x2="1057.5" y2="569" stroke="#686868" stroke-dasharray="2 2"/><line x1="1089.5" y1="74" x2="1089.5" y2="569" stroke="#686868" stroke-dasharray="2 2"/><line x1="1121.5" y1="74" x2="1121.5" y2="569" stroke="#686868" stroke-dasharray="2 2"/><line x1="1153.5" y1="74" x2="1153.5" y2="569" stroke="#686868" stroke-dasharray="2 2"/><line x1="1185.5" y1="74" x2="1185.5" y2="569" stroke="#686868" stroke-dasharray="2 2"/><line x1="1218.5" y1="74" x2="1218.5" y2="569" stroke="#686868" stroke-dasharray="2 2"/><line x1="190" y1="103.5" x2="1244" y2="103.5" stroke="#686868" stroke-dasharray="2 2"/><line x1="190" y1="137.5" x2="1244" y2="137.5" stroke="#686868" stroke-dasharray="2 2"/><line x1="190" y1="172.5" x2="1244" y2="172.5" stroke="#686868" stroke-dasharray="2 2"/><line x1="190" y1="206.5" x2="1244" y2="206.5" stroke="#686868" stroke-dasharray="2 2"/><line x1="190" y1="241.5" x2="1244" y2="241.5" stroke="#686868" stroke-dasharray="2 2"/><line x1="190" y1="275.5" x2="1244" y2="275.5" stroke="#686868" stroke-dasharray="2 2"/><line x1="190" y1="310.5" x2="1244" y2="310.5" stroke="#686868" stroke-dasharray="2 2"/><line x1="190" y1="344.5" x2="1244" y2="344.5" stroke="#686868" stroke-dasharray="2 2"/><line x1="190" y1="379.5" x2="1244" y2="379.5" stroke="#686868" stroke-dasharray="2 2"/><line x1="190" y1="414.5" x2="1244" y2="414.5" stroke="#686868" stroke-dasharray="2 2"/><line x1="190" y1="448.5" x2="1244" y2="448.5" stroke="#686868" stroke-dasharray="2 2"/><line x1="190" y1="483.5" x2="1244" y2="483.5" stroke="#686868" stroke-dasharray="2 2"/><line x1="190" y1="517.5" x2="1244" y2="517.5" stroke="#686868" stroke-dasharray="2 2"/><line x1="190" y1="552.5" x2="1244" y2="552.5" stroke="#686868" stroke-dasharray="2 2"/><line x1="190" y1="194.5" x2="1244" y2="194.5" stroke="#2c6e2c" stroke-dasharray="8 3 2 3"/><line x1="190" y1="356.5" x2="1244" y2="356.5" stroke="#2c6e2c" stroke-dasharray="8 3 2 3"/><line x1="190" y1="420.5" x2="1244" y2="420.5" stroke="#2c6e2c" stroke-dasharray="8 3 2 3"/><line x1="190" y1="434.5" x2="1244" y2="434.5" stroke="#2c6e2c" stroke-dasharray="8 3 2 3"/><line x1="190" y1="319.5" x2="1244" y2="319.5" stroke="#8c8c8c" stroke-width="1"/><path d="M189.5 73.5 H1244.5 V569.5 H189.5 Z" fill="none" stroke="#c8c8c8" stroke-width="1"/><rect x="192" y="408.0" width="1" height="85.0" fill="#22a622"/><rect x="191.5" y="450.5" width="2" height="21.6" fill="#1ec41e"/><rect x="192" y="451.0" width="1" height="20.6" fill="#86ff78"/><rect x="195" y="435.9" width="1" height="49.2" fill="#22a622"/><rect x="194.5" y="443.9" width="2" height="28.2" fill="#19a819"/><rect x="195" y="444.4" width="1" height="27.2" fill="#4ae04a"/><rect x="198" y="433.0" width="1" height="74.0" fill="#22a622"/><rect x="197.5" y="443.9" width="2" height="41.5" fill="#1ec41e"/><rect x="198" y="444.4" width="1" height="40.5" fill="#86ff78"/><rect x="200" y="477.7" width="1" height="34.3" fill="#22a622"/><rect x="199.5" y="485.4" width="2" height="23.5" fill="#1ec41e"/><rect x="200" y="485.9" width="1" height="22.5" fill="#86ff78"/><rect x="203" y="467.0" width="1" height="41.9" fill="#22a622"/><rect x="202.5" y="479.8" width="2" height="29.1" fill="#19a819"/><rect x="203" y="480.3" width="1" height="28.1" fill="#4ae04a"/><rect x="206" y="485.0" width="1" height="31.4" fill="#22a622"/><rect x="205.5" y="479.8" width="2" height="15.8" fill="#1ec41e"/><rect x="206" y="480.3" width="1" height="14.8" fill="#86ff78"/><rect x="208" y="495.6" width="1" height="37.4" fill="#22a622"/><rect x="207.5" y="495.6" width="2" height="11.1" fill="#1ec41e"/><rect x="208" y="496.1" width="1" height="10.1" fill="#86ff78"/><rect x="211" y="491.0" width="1" height="20.6" fill="#22a622"/><rect x="210.5" y="494.6" width="2" height="12.2" fill="#19a819"/><rect x="211" y="495.1" width="1" height="11.2" fill="#4ae04a"/><rect x="214" y="494.1" width="1" height="35.9" fill="#22a622"/><rect x="213.5" y="494.6" width="2" height="26.8" fill="#1ec41e"/><rect x="214" y="495.1" width="1" height="25.8" fill="#86ff78"/><rect x="216" y="503.8" width="1" height="37.0" fill="#22a622"/><rect x="215.5" y="521.4" width="2" height="12.7" fill="#1ec41e"/><rect x="216" y="521.9" width="1" height="11.7" fill="#86ff78"/><rect x="219" y="495.8" width="1" height="38.2" fill="#22a622"/><rect x="218.5" y="508.4" width="2" height="25.7" fill="#19a819"/><rect x="219" y="508.9" width="1" height="24.7" fill="#4ae04a"/><rect x="222" y="467.0" width="1" height="82.0" fill="#22a622"/><rect x="221.5" y="474.6" width="2" height="33.8" fill="#19a819"/><rect x="222" y="475.1" width="1" height="32.8" fill="#4ae04a"/><rect x="224" y="455.5" width="1" height="37.5" fill="#22a622"/><rect x="223.5" y="459.1" width="2" height="15.5" fill="#19a819"/><rect x="224" y="459.6" width="1" height="14.5" fill="#4ae04a"/><rect x="227" y="433.0" width="1" height="45.0" fill="#22a622"/><rect x="226.5" y="459.1" width="2" height="15.6" fill="#1ec41e"/><rect x="227" y="459.6" width="1" height="14.6" fill="#86ff78"/><rect x="230" y="447.9" width="1" height="19.1" fill="#22a622"/><rect x="229.5" y="451.8" width="2" height="22.9" fill="#19a819"/><rect x="230" y="452.3" width="1" height="21.9" fill="#4ae04a"/><rect x="233" y="433.0" width="1" height="24.2" fill="#22a622"/><rect x="232.5" y="448.0" width="2" height="3.8" fill="#19a819"/><rect x="233" y="448.5" width="1" height="2.8" fill="#4ae04a"/><rect x="235" y="440.5" width="1" height="42.5" fill="#22a622"/><rect x="234.5" y="448.0" width="2" height="9.8" fill="#1ec41e"/><rect x="235" y="448.5" width="1" height="8.8" fill="#86ff78"/><rect x="238" y="412.0" width="1" height="54.7" fill="#22a622"/><rect x="237.5" y="435.3" width="2" height="22.5" fill="#19a819"/><rect x="238" y="435.8" width="1" height="21.5" fill="#4ae04a"/><rect x="241" y="417.9" width="1" height="46.0" fill="#22a622"/><rect x="240.5" y="435.3" width="2" height="27.9" fill="#1ec41e"/><rect x="241" y="435.8" width="1" height="26.9" fill="#86ff78"/><rect x="243" y="449.8" width="1" height="13.5" fill="#22a622"/><rect x="242.5" y="454.4" width="2" height="8.8" fill="#19a819"/><rect x="243" y="454.9" width="1" height="7.8" fill="#4ae04a"/><rect x="246" y="453.4" width="1" height="16.6" fill="#22a622"/><rect x="245.5" y="454.4" width="2" height="5.9" fill="#1ec41e"/><rect x="246" y="454.9" width="1" height="4.9" fill="#86ff78"/><rect x="249" y="438.0" width="1" height="22.3" fill="#22a622"/><rect x="248.5" y="451.7" width="2" height="8.6" fill="#19a819"/><rect x="249" y="452.2" width="1" height="7.6" fill="#4ae04a"/><rect x="251" y="459.0" width="1" height="23.1" fill="#22a622"/><rect x="250.5" y="451.7" width="2" height="21.7" fill="#1ec41e"/><rect x="251" y="452.2" width="1" height="20.7" fill="#86ff78"/><rect x="254" y="473.4" width="1" height="33.6" fill="#22a622"/><rect x="253.5" y="473.4" width="2" height="18.5" fill="#1ec41e"/><rect x="254" y="473.9" width="1" height="17.5" fill="#86ff78"/><rect x="257" y="476.1" width="1" height="15.9" fill="#22a622"/><rect x="256.5" y="483.9" width="2" height="8.0" fill="#19a819"/><rect x="257" y="484.4" width="1" height="7.0" fill="#4ae04a"/><rect x="259" y="483.9" width="1" height="33.9" fill="#22a622"/><rect x="258.5" y="483.9" width="2" height="20.3" fill="#1ec41e"/><rect x="259" y="484.4" width="1" height="19.3" fill="#86ff78"/><rect x="262" y="480.0" width="1" height="35.8" fill="#22a622"/><rect x="261.5" y="483.0" width="2" height="21.2" fill="#19a819"/><rect x="262" y="483.5" width="1" height="20.2" fill="#4ae04a"/><rect x="265" y="483.0" width="1" height="45.0" fill="#22a622"/><rect x="264.5" y="483.0" width="2" height="23.4" fill="#1ec41e"/><rect x="265" y="483.5" width="1" height="22.4" fill="#86ff78"/><rect x="267" y="478.0" width="1" height="33.7" fill="#22a622"/><rect x="266.5" y="486.8" width="2" height="19.6" fill="#19a819"/><rect x="267" y="487.3" width="1" height="18.6" fill="#4ae04a"/><rect x="270" y="486.8" width="1" height="30.2" fill="#22a622"/><rect x="269.5" y="486.8" width="2" height="20.8" fill="#1ec41e"/><rect x="270" y="487.3" width="1" height="19.8" fill="#86ff78"/><rect x="273" y="454.0" width="1" height="37.0" fill="#22a622"/><rect x="272.5" y="480.4" width="2" height="27.2" fill="#19a819"/><rect x="273" y="480.9" width="1" height="26.2" fill="#4ae04a"/><rect x="275" y="463.2" width="1" height="19.7" fill="#22a622"/><rect x="274.5" y="467.5" width="2" height="12.9" fill="#19a819"/><rect x="275" y="468.0" width="1" height="11.9" fill="#4ae04a"/><rect x="278" y="438.0" width="1" height="29.5" fill="#22a622"/><rect x="277.5" y="459.4" width="2" height="8.1" fill="#19a819"/><rect x="278" y="459.9" width="1" height="7.1" fill="#4ae04a"/><rect x="281" y="448.0" width="1" height="22.0" fill="#22a622"/><rect x="280.5" y="451.2" width="2" height="8.2" fill="#19a819"/><rect x="281" y="451.7" width="1" height="7.2" fill="#4ae04a"/><rect x="283" y="450.8" width="1" height="13.3" fill="#22a622"/><rect x="282.5" y="451.2" width="2" height="8.4" fill="#1ec41e"/><rect x="283" y="451.7" width="1" height="7.4" fill="#86ff78"/><rect x="286" y="449.0" width="1" height="51.0" fill="#22a622"/><rect x="285.5" y="459.5" width="2" height="30.2" fill="#1ec41e"/><rect x="286" y="460.0" width="1" height="29.2" fill="#86ff78"/><rect x="289" y="459.4" width="1" height="30.4" fill="#22a622"/><rect x="288.5" y="476.7" width="2" height="13.0" fill="#19a819"/><rect x="289" y="477.2" width="1" height="12.0" fill="#4ae04a"/><rect x="291" y="456.7" width="1" height="20.0" fill="#22a622"/><rect x="290.5" y="464.2" width="2" height="12.6" fill="#19a819"/><rect x="291" y="464.7" width="1" height="11.6" fill="#4ae04a"/><rect x="294" y="437.0" width="1" height="52.0" fill="#22a622"/><rect x="293.5" y="464.2" width="2" height="10.7" fill="#1ec41e"/><rect x="294" y="464.7" width="1" height="9.7" fill="#86ff78"/><rect x="297" y="423.6" width="1" height="15.4" fill="#22a622"/><rect x="296.5" y="448.1" width="2" height="26.7" fill="#19a819"/><rect x="297" y="448.6" width="1" height="25.7" fill="#4ae04a"/><rect x="299" y="412.0" width="1" height="36.1" fill="#22a622"/><rect x="298.5" y="419.7" width="2" height="28.4" fill="#19a819"/><rect x="299" y="420.2" width="1" height="27.4" fill="#4ae04a"/><rect x="302" y="392.1" width="1" height="31.9" fill="#22a622"/><rect x="301.5" y="393.2" width="2" height="26.5" fill="#19a819"/><rect x="302" y="393.7" width="1" height="25.5" fill="#4ae04a"/><rect x="305" y="375.0" width="1" height="44.6" fill="#22a622"/><rect x="304.5" y="393.2" width="2" height="21.0" fill="#1ec41e"/><rect x="305" y="393.7" width="1" height="20.0" fill="#86ff78"/><rect x="307" y="387.0" width="1" height="52.0" fill="#22a622"/><rect x="306.5" y="390.8" width="2" height="23.4" fill="#19a819"/><rect x="307" y="391.3" width="1" height="22.4" fill="#4ae04a"/><rect x="310" y="389.9" width="1" height="38.7" fill="#22a622"/><rect x="309.5" y="390.8" width="2" height="37.2" fill="#1ec41e"/><rect x="310" y="391.3" width="1" height="36.2" fill="#86ff78"/><rect x="313" y="407.6" width="1" height="11.4" fill="#22a622"/><rect x="312.5" y="409.4" width="2" height="18.6" fill="#19a819"/><rect x="313" y="409.9" width="1" height="17.6" fill="#4ae04a"/><rect x="315" y="397.0" width="1" height="17.8" fill="#22a622"/><rect x="314.5" y="402.1" width="2" height="7.3" fill="#19a819"/><rect x="315" y="402.6" width="1" height="6.3" fill="#4ae04a"/><rect x="318" y="357.0" width="1" height="48.0" fill="#22a622"/><rect x="317.5" y="385.2" width="2" height="16.9" fill="#19a819"/><rect x="318" y="385.7" width="1" height="15.9" fill="#4ae04a"/><rect x="321" y="369.3" width="1" height="22.9" fill="#22a622"/><rect x="320.5" y="370.1" width="2" height="15.1" fill="#19a819"/><rect x="321" y="370.6" width="1" height="14.1" fill="#4ae04a"/><rect x="323" y="356.0" width="1" height="47.9" fill="#22a622"/><rect x="322.5" y="370.1" width="2" height="28.4" fill="#1ec41e"/><rect x="323" y="370.6" width="1" height="27.4" fill="#86ff78"/><rect x="326" y="382.9" width="1" height="32.1" fill="#22a622"/><rect x="325.5" y="383.1" width="2" height="15.4" fill="#19a819"/><rect x="326" y="383.6" width="1" height="14.4" fill="#4ae04a"/><rect x="329" y="407.0" width="1" height="36.9" fill="#22a622"/><rect x="328.5" y="383.1" width="2" height="55.4" fill="#1ec41e"/><rect x="329" y="383.6" width="1" height="54.4" fill="#86ff78"/><rect x="332" y="422.5" width="1" height="36.5" fill="#22a622"/><rect x="331.5" y="438.5" width="2" height="13.4" fill="#1ec41e"/><rect x="332" y="439.0" width="1" height="12.4" fill="#86ff78"/><rect x="334" y="428.7" width="1" height="20.3" fill="#22a622"/><rect x="333.5" y="438.4" width="2" height="13.6" fill="#19a819"/><rect x="334" y="438.9" width="1" height="12.6" fill="#4ae04a"/><rect x="337" y="405.0" width="1" height="35.1" fill="#22a622"/><rect x="336.5" y="414.0" width="2" height="24.4" fill="#19a819"/><rect x="337" y="414.5" width="1" height="23.4" fill="#4ae04a"/><rect x="340" y="414.0" width="1" height="22.1" fill="#22a622"/><rect x="339.5" y="414.0" width="2" height="11.8" fill="#1ec41e"/><rect x="340" y="414.5" width="1" height="10.8" fill="#86ff78"/><rect x="342" y="390.0" width="1" height="44.0" fill="#22a622"/><rect x="341.5" y="411.5" width="2" height="14.3" fill="#19a819"/><rect x="342" y="412.0" width="1" height="13.3" fill="#4ae04a"/><rect x="345" y="411.5" width="1" height="1.8" fill="#22a622"/><rect x="344.5" y="411.5" width="2" height="1.0" fill="#1ec41e"/><rect x="345" y="412.0" width="1" height="0.5" fill="#86ff78"/><rect x="348" y="409.8" width="1" height="6.3" fill="#22a622"/><rect x="347.5" y="412.5" width="2" height="3.1" fill="#1ec41e"/><rect x="348" y="413.0" width="1" height="2.1" fill="#86ff78"/><rect x="350" y="402.5" width="1" height="22.9" fill="#22a622"/><rect x="349.5" y="402.8" width="2" height="12.8" fill="#19a819"/><rect x="350" y="403.3" width="1" height="11.8" fill="#4ae04a"/><rect x="353" y="350.0" width="1" height="38.0" fill="#22a622"/><rect x="352.5" y="358.7" width="2" height="44.1" fill="#19a819"/><rect x="353" y="359.2" width="1" height="43.1" fill="#4ae04a"/><rect x="356" y="358.7" width="1" height="9.3" fill="#22a622"/><rect x="355.5" y="358.7" width="2" height="6.8" fill="#1ec41e"/><rect x="356" y="359.2" width="1" height="5.8" fill="#86ff78"/><rect x="358" y="346.7" width="1" height="23.3" fill="#22a622"/><rect x="357.5" y="357.5" width="2" height="8.0" fill="#19a819"/><rect x="358" y="358.0" width="1" height="7.0" fill="#4ae04a"/><rect x="361" y="331.6" width="1" height="32.6" fill="#22a622"/><rect x="360.5" y="335.1" width="2" height="22.3" fill="#19a819"/><rect x="361" y="335.6" width="1" height="21.3" fill="#4ae04a"/><rect x="364" y="322.0" width="1" height="42.6" fill="#22a622"/><rect x="363.5" y="335.1" width="2" height="18.4" fill="#1ec41e"/><rect x="364" y="335.6" width="1" height="17.4" fill="#86ff78"/><rect x="366" y="357.0" width="1" height="28.0" fill="#22a622"/><rect x="365.5" y="353.6" width="2" height="22.4" fill="#1ec41e"/><rect x="366" y="354.1" width="1" height="21.4" fill="#86ff78"/><rect x="369" y="375.7" width="1" height="10.5" fill="#22a622"/><rect x="368.5" y="375.9" width="2" height="9.7" fill="#1ec41e"/><rect x="369" y="376.4" width="1" height="8.7" fill="#86ff78"/><rect x="372" y="375.9" width="1" height="9.7" fill="#22a622"/><rect x="371.5" y="380.5" width="2" height="5.2" fill="#19a819"/><rect x="372" y="381.0" width="1" height="4.2" fill="#4ae04a"/><rect x="374" y="378.5" width="1" height="16.9" fill="#22a622"/><rect x="373.5" y="380.5" width="2" height="13.3" fill="#1ec41e"/><rect x="374" y="381.0" width="1" height="12.3" fill="#86ff78"/><rect x="377" y="379.6" width="1" height="29.4" fill="#22a622"/><rect x="376.5" y="386.4" width="2" height="7.4" fill="#19a819"/><rect x="377" y="386.9" width="1" height="6.4" fill="#4ae04a"/><rect x="380" y="359.8" width="1" height="17.2" fill="#22a622"/><rect x="379.5" y="366.2" width="2" height="20.2" fill="#19a819"/><rect x="380" y="366.7" width="1" height="19.2" fill="#4ae04a"/><rect x="382" y="340.0" width="1" height="26.2" fill="#22a622"/><rect x="381.5" y="360.0" width="2" height="6.2" fill="#19a819"/><rect x="382" y="360.5" width="1" height="5.2" fill="#4ae04a"/><rect x="385" y="317.0" width="1" height="44.0" fill="#22a622"/><rect x="384.5" y="341.9" width="2" height="18.1" fill="#19a819"/><rect x="385" y="342.4" width="1" height="17.1" fill="#4ae04a"/><rect x="388" y="338.3" width="1" height="26.7" fill="#22a622"/><rect x="387.5" y="341.9" width="2" height="9.7" fill="#1ec41e"/><rect x="388" y="342.4" width="1" height="8.7" fill="#86ff78"/><rect x="390" y="342.9" width="1" height="8.7" fill="#22a622"/><rect x="389.5" y="344.7" width="2" height="6.9" fill="#19a819"/><rect x="390" y="345.2" width="1" height="5.9" fill="#4ae04a"/><rect x="393" y="291.0" width="1" height="39.0" fill="#22a622"/><rect x="392.5" y="303.1" width="2" height="41.6" fill="#19a819"/><rect x="393" y="303.6" width="1" height="40.6" fill="#4ae04a"/><rect x="396" y="303.1" width="1" height="12.9" fill="#22a622"/><rect x="395.5" y="303.1" width="2" height="8.8" fill="#1ec41e"/><rect x="396" y="303.6" width="1" height="7.8" fill="#86ff78"/><rect x="398" y="311.0" width="1" height="9.7" fill="#22a622"/><rect x="397.5" y="312.0" width="2" height="4.2" fill="#1ec41e"/><rect x="398" y="312.5" width="1" height="3.2" fill="#86ff78"/><rect x="401" y="325.0" width="1" height="42.0" fill="#22a622"/><rect x="400.5" y="316.1" width="2" height="39.0" fill="#1ec41e"/><rect x="401" y="316.6" width="1" height="38.0" fill="#86ff78"/><rect x="404" y="331.8" width="1" height="29.7" fill="#22a622"/><rect x="403.5" y="340.0" width="2" height="15.2" fill="#19a819"/><rect x="404" y="340.5" width="1" height="14.2" fill="#4ae04a"/><rect x="406" y="331.0" width="1" height="26.3" fill="#22a622"/><rect x="405.5" y="340.0" width="2" height="16.0" fill="#1ec41e"/><rect x="406" y="340.5" width="1" height="15.0" fill="#86ff78"/><rect x="409" y="356.0" width="1" height="26.0" fill="#22a622"/><rect x="408.5" y="356.0" width="2" height="13.2" fill="#1ec41e"/><rect x="409" y="356.5" width="1" height="12.2" fill="#86ff78"/><rect x="412" y="342.0" width="1" height="27.2" fill="#22a622"/><rect x="411.5" y="358.5" width="2" height="10.7" fill="#19a819"/><rect x="412" y="359.0" width="1" height="9.7" fill="#4ae04a"/><rect x="414" y="358.5" width="1" height="12.5" fill="#22a622"/><rect x="413.5" y="358.5" width="2" height="8.5" fill="#1ec41e"/><rect x="414" y="359.0" width="1" height="7.5" fill="#86ff78"/><rect x="417" y="303.6" width="1" height="21.4" fill="#22a622"/><rect x="416.5" y="320.4" width="2" height="46.6" fill="#19a819"/><rect x="417" y="320.9" width="1" height="45.6" fill="#4ae04a"/><rect x="420" y="298.0" width="1" height="26.9" fill="#22a622"/><rect x="419.5" y="308.7" width="2" height="11.6" fill="#19a819"/><rect x="420" y="309.2" width="1" height="10.6" fill="#4ae04a"/><rect x="422" y="295.0" width="1" height="22.2" fill="#22a622"/><rect x="421.5" y="302.6" width="2" height="6.2" fill="#19a819"/><rect x="422" y="303.1" width="1" height="5.2" fill="#4ae04a"/><rect x="425" y="295.0" width="1" height="24.6" fill="#22a622"/><rect x="424.5" y="302.6" width="2" height="11.7" fill="#1ec41e"/><rect x="425" y="303.1" width="1" height="10.7" fill="#86ff78"/><rect x="428" y="304.2" width="1" height="10.2" fill="#22a622"/><rect x="427.5" y="304.8" width="2" height="9.5" fill="#19a819"/><rect x="428" y="305.3" width="1" height="8.5" fill="#4ae04a"/><rect x="430" y="304.2" width="1" height="20.8" fill="#22a622"/><rect x="429.5" y="304.8" width="2" height="13.4" fill="#1ec41e"/><rect x="430" y="305.3" width="1" height="12.4" fill="#86ff78"/><rect x="433" y="307.7" width="1" height="10.5" fill="#22a622"/><rect x="432.5" y="311.3" width="2" height="7.0" fill="#19a819"/><rect x="433" y="311.8" width="1" height="6.0" fill="#4ae04a"/><rect x="436" y="300.8" width="1" height="19.2" fill="#22a622"/><rect x="435.5" y="303.6" width="2" height="7.7" fill="#19a819"/><rect x="436" y="304.1" width="1" height="6.7" fill="#4ae04a"/><rect x="438" y="287.0" width="1" height="23.8" fill="#22a622"/><rect x="437.5" y="303.6" width="2" height="5.0" fill="#1ec41e"/><rect x="438" y="304.1" width="1" height="4.0" fill="#86ff78"/><rect x="441" y="264.1" width="1" height="22.9" fill="#22a622"/><rect x="440.5" y="278.3" width="2" height="30.3" fill="#19a819"/><rect x="441" y="278.8" width="1" height="29.3" fill="#4ae04a"/><rect x="444" y="250.0" width="1" height="28.3" fill="#22a622"/><rect x="443.5" y="267.5" width="2" height="10.8" fill="#19a819"/><rect x="444" y="268.0" width="1" height="9.8" fill="#4ae04a"/><rect x="447" y="267.5" width="1" height="1.0" fill="#22a622"/><rect x="446.5" y="267.5" width="2" height="1.0" fill="#1ec41e"/><rect x="447" y="268.0" width="1" height="0.5" fill="#86ff78"/><rect x="449" y="252.6" width="1" height="15.2" fill="#22a622"/><rect x="448.5" y="260.3" width="2" height="7.5" fill="#19a819"/><rect x="449" y="260.8" width="1" height="6.5" fill="#4ae04a"/><rect x="452" y="243.1" width="1" height="37.9" fill="#22a622"/><rect x="451.5" y="260.3" width="2" height="13.2" fill="#1ec41e"/><rect x="452" y="260.8" width="1" height="12.2" fill="#86ff78"/><rect x="455" y="240.0" width="1" height="35.6" fill="#22a622"/><rect x="454.5" y="243.0" width="2" height="30.5" fill="#19a819"/><rect x="455" y="243.5" width="1" height="29.5" fill="#4ae04a"/><rect x="457" y="248.0" width="1" height="15.9" fill="#22a622"/><rect x="456.5" y="243.0" width="2" height="9.6" fill="#1ec41e"/><rect x="457" y="243.5" width="1" height="8.6" fill="#86ff78"/><rect x="460" y="250.4" width="1" height="25.6" fill="#22a622"/><rect x="459.5" y="252.7" width="2" height="7.4" fill="#1ec41e"/><rect x="460" y="253.2" width="1" height="6.4" fill="#86ff78"/><rect x="463" y="250.2" width="1" height="12.2" fill="#22a622"/><rect x="462.5" y="255.9" width="2" height="4.2" fill="#19a819"/><rect x="463" y="256.4" width="1" height="3.2" fill="#4ae04a"/><rect x="465" y="251.4" width="1" height="9.9" fill="#22a622"/><rect x="464.5" y="255.9" width="2" height="4.1" fill="#1ec41e"/><rect x="465" y="256.4" width="1" height="3.1" fill="#86ff78"/><rect x="468" y="253.1" width="1" height="7.0" fill="#22a622"/><rect x="467.5" y="256.6" width="2" height="3.5" fill="#19a819"/><rect x="468" y="257.1" width="1" height="2.5" fill="#4ae04a"/><rect x="471" y="248.0" width="1" height="19.0" fill="#22a622"/><rect x="470.5" y="251.8" width="2" height="4.7" fill="#19a819"/><rect x="471" y="252.3" width="1" height="3.7" fill="#4ae04a"/><rect x="473" y="253.0" width="1" height="40.2" fill="#22a622"/><rect x="472.5" y="251.8" width="2" height="33.4" fill="#1ec41e"/><rect x="473" y="252.3" width="1" height="32.4" fill="#86ff78"/><rect x="476" y="270.9" width="1" height="27.1" fill="#22a622"/><rect x="475.5" y="275.7" width="2" height="9.6" fill="#19a819"/><rect x="476" y="276.2" width="1" height="8.6" fill="#4ae04a"/><rect x="479" y="226.0" width="1" height="30.0" fill="#22a622"/><rect x="478.5" y="241.7" width="2" height="34.0" fill="#19a819"/><rect x="479" y="242.2" width="1" height="33.0" fill="#4ae04a"/><rect x="481" y="236.3" width="1" height="11.3" fill="#22a622"/><rect x="480.5" y="241.7" width="2" height="5.6" fill="#1ec41e"/><rect x="481" y="242.2" width="1" height="4.6" fill="#86ff78"/><rect x="484" y="228.8" width="1" height="19.2" fill="#22a622"/><rect x="483.5" y="239.6" width="2" height="7.7" fill="#19a819"/><rect x="484" y="240.1" width="1" height="6.7" fill="#4ae04a"/><rect x="487" y="206.0" width="1" height="35.9" fill="#22a622"/><rect x="486.5" y="209.2" width="2" height="30.4" fill="#19a819"/><rect x="487" y="209.7" width="1" height="29.4" fill="#4ae04a"/><rect x="489" y="209.2" width="1" height="32.6" fill="#22a622"/><rect x="488.5" y="209.2" width="2" height="30.1" fill="#1ec41e"/><rect x="489" y="209.7" width="1" height="29.1" fill="#86ff78"/><rect x="492" y="215.8" width="1" height="23.5" fill="#22a622"/><rect x="491.5" y="227.3" width="2" height="11.9" fill="#19a819"/><rect x="492" y="227.8" width="1" height="10.9" fill="#4ae04a"/><rect x="495" y="212.0" width="1" height="32.6" fill="#22a622"/><rect x="494.5" y="227.3" width="2" height="7.7" fill="#1ec41e"/><rect x="495" y="227.8" width="1" height="6.7" fill="#86ff78"/><rect x="497" y="214.3" width="1" height="11.7" fill="#22a622"/><rect x="496.5" y="215.4" width="2" height="19.6" fill="#19a819"/><rect x="497" y="215.9" width="1" height="18.6" fill="#4ae04a"/><rect x="500" y="209.0" width="1" height="10.6" fill="#22a622"/><rect x="499.5" y="211.0" width="2" height="4.4" fill="#19a819"/><rect x="500" y="211.5" width="1" height="3.4" fill="#4ae04a"/><rect x="503" y="209.7" width="1" height="7.5" fill="#22a622"/><rect x="502.5" y="211.0" width="2" height="3.8" fill="#1ec41e"/><rect x="503" y="211.5" width="1" height="2.8" fill="#86ff78"/><rect x="505" y="183.0" width="1" height="26.0" fill="#22a622"/><rect x="504.5" y="204.9" width="2" height="9.9" fill="#19a819"/><rect x="505" y="205.4" width="1" height="8.9" fill="#4ae04a"/><rect x="508" y="198.0" width="1" height="28.9" fill="#22a622"/><rect x="507.5" y="204.9" width="2" height="16.0" fill="#1ec41e"/><rect x="508" y="205.4" width="1" height="15.0" fill="#86ff78"/><rect x="511" y="208.3" width="1" height="28.0" fill="#22a622"/><rect x="510.5" y="220.9" width="2" height="6.8" fill="#1ec41e"/><rect x="511" y="221.4" width="1" height="5.8" fill="#86ff78"/><rect x="513" y="206.1" width="1" height="46.9" fill="#22a622"/><rect x="512.5" y="212.9" width="2" height="14.8" fill="#19a819"/><rect x="513" y="213.4" width="1" height="13.8" fill="#4ae04a"/><rect x="516" y="237.0" width="1" height="25.0" fill="#22a622"/><rect x="515.5" y="212.9" width="2" height="42.9" fill="#1ec41e"/><rect x="516" y="213.4" width="1" height="41.9" fill="#86ff78"/><rect x="519" y="237.7" width="1" height="21.5" fill="#22a622"/><rect x="518.5" y="241.1" width="2" height="14.8" fill="#19a819"/><rect x="519" y="241.6" width="1" height="13.8" fill="#4ae04a"/><rect x="521" y="241.1" width="1" height="10.5" fill="#22a622"/><rect x="520.5" y="241.1" width="2" height="8.6" fill="#1ec41e"/><rect x="521" y="241.6" width="1" height="7.6" fill="#86ff78"/><rect x="524" y="232.9" width="1" height="18.1" fill="#22a622"/><rect x="523.5" y="236.4" width="2" height="13.4" fill="#19a819"/><rect x="524" y="236.9" width="1" height="12.4" fill="#4ae04a"/><rect x="527" y="226.0" width="1" height="21.6" fill="#22a622"/><rect x="526.5" y="236.4" width="2" height="11.1" fill="#1ec41e"/><rect x="527" y="236.9" width="1" height="10.1" fill="#86ff78"/><rect x="529" y="236.1" width="1" height="11.4" fill="#22a622"/><rect x="528.5" y="237.4" width="2" height="10.1" fill="#19a819"/><rect x="529" y="237.9" width="1" height="9.1" fill="#4ae04a"/><rect x="532" y="190.0" width="1" height="52.0" fill="#22a622"/><rect x="531.5" y="205.7" width="2" height="31.6" fill="#19a819"/><rect x="532" y="206.2" width="1" height="30.6" fill="#4ae04a"/><rect x="535" y="205.7" width="1" height="23.9" fill="#22a622"/><rect x="534.5" y="205.7" width="2" height="16.8" fill="#1ec41e"/><rect x="535" y="206.2" width="1" height="15.8" fill="#86ff78"/><rect x="537" y="213.9" width="1" height="16.9" fill="#22a622"/><rect x="536.5" y="216.5" width="2" height="6.0" fill="#19a819"/><rect x="537" y="217.0" width="1" height="5.0" fill="#4ae04a"/><rect x="540" y="226.0" width="1" height="16.5" fill="#22a622"/><rect x="539.5" y="216.5" width="2" height="20.7" fill="#1ec41e"/><rect x="540" y="217.0" width="1" height="19.7" fill="#86ff78"/><rect x="543" y="237.2" width="1" height="24.8" fill="#22a622"/><rect x="542.5" y="237.2" width="2" height="6.7" fill="#1ec41e"/><rect x="543" y="237.7" width="1" height="5.7" fill="#86ff78"/><rect x="546" y="233.6" width="1" height="14.7" fill="#22a622"/><rect x="545.5" y="233.9" width="2" height="10.0" fill="#19a819"/><rect x="546" y="234.4" width="1" height="9.0" fill="#4ae04a"/><rect x="548" y="228.0" width="1" height="25.0" fill="#22a622"/><rect x="547.5" y="233.9" width="2" height="10.1" fill="#1ec41e"/><rect x="548" y="234.4" width="1" height="9.1" fill="#86ff78"/><rect x="551" y="231.5" width="1" height="19.2" fill="#22a622"/><rect x="550.5" y="232.1" width="2" height="11.8" fill="#19a819"/><rect x="551" y="232.6" width="1" height="10.8" fill="#4ae04a"/><rect x="554" y="232.1" width="1" height="8.9" fill="#22a622"/><rect x="553.5" y="232.1" width="2" height="5.3" fill="#1ec41e"/><rect x="554" y="232.6" width="1" height="4.3" fill="#86ff78"/><rect x="556" y="231.9" width="1" height="17.8" fill="#22a622"/><rect x="555.5" y="237.5" width="2" height="10.1" fill="#1ec41e"/><rect x="556" y="238.0" width="1" height="9.1" fill="#86ff78"/><rect x="559" y="242.3" width="1" height="24.7" fill="#22a622"/><rect x="558.5" y="247.5" width="2" height="12.2" fill="#1ec41e"/><rect x="559" y="248.0" width="1" height="11.2" fill="#86ff78"/><rect x="562" y="234.0" width="1" height="25.7" fill="#22a622"/><rect x="561.5" y="251.0" width="2" height="8.7" fill="#19a819"/><rect x="562" y="251.5" width="1" height="7.7" fill="#4ae04a"/><rect x="564" y="243.9" width="1" height="18.6" fill="#22a622"/><rect x="563.5" y="251.0" width="2" height="4.9" fill="#1ec41e"/><rect x="564" y="251.5" width="1" height="3.9" fill="#86ff78"/><rect x="567" y="239.6" width="1" height="20.9" fill="#22a622"/><rect x="566.5" y="239.6" width="2" height="16.2" fill="#19a819"/><rect x="567" y="240.1" width="1" height="15.2" fill="#4ae04a"/><rect x="570" y="239.6" width="1" height="18.8" fill="#22a622"/><rect x="569.5" y="239.6" width="2" height="13.1" fill="#1ec41e"/><rect x="570" y="240.1" width="1" height="12.1" fill="#86ff78"/><rect x="572" y="253.0" width="1" height="38.3" fill="#22a622"/><rect x="571.5" y="252.7" width="2" height="38.4" fill="#1ec41e"/><rect x="572" y="253.2" width="1" height="37.4" fill="#86ff78"/><rect x="575" y="260.7" width="1" height="42.7" fill="#22a622"/><rect x="574.5" y="268.0" width="2" height="23.2" fill="#19a819"/><rect x="575" y="268.5" width="1" height="22.2" fill="#4ae04a"/><rect x="578" y="254.2" width="1" height="51.8" fill="#22a622"/><rect x="577.5" y="268.0" width="2" height="30.5" fill="#1ec41e"/><rect x="578" y="268.5" width="1" height="29.5" fill="#86ff78"/><rect x="580" y="242.0" width="1" height="36.0" fill="#22a622"/><rect x="579.5" y="263.1" width="2" height="35.4" fill="#19a819"/><rect x="580" y="263.6" width="1" height="34.4" fill="#4ae04a"/><rect x="583" y="256.9" width="1" height="8.1" fill="#22a622"/><rect x="582.5" y="259.5" width="2" height="3.6" fill="#19a819"/><rect x="583" y="260.0" width="1" height="2.6" fill="#4ae04a"/><rect x="586" y="259.4" width="1" height="10.9" fill="#22a622"/><rect x="585.5" y="259.5" width="2" height="8.6" fill="#1ec41e"/><rect x="586" y="260.0" width="1" height="7.6" fill="#86ff78"/><rect x="588" y="261.5" width="1" height="13.5" fill="#22a622"/><rect x="587.5" y="268.2" width="2" height="3.9" fill="#1ec41e"/><rect x="588" y="268.7" width="1" height="2.9" fill="#86ff78"/><rect x="591" y="256.6" width="1" height="30.4" fill="#22a622"/><rect x="590.5" y="264.4" width="2" height="7.7" fill="#19a819"/><rect x="591" y="264.9" width="1" height="6.7" fill="#4ae04a"/><rect x="594" y="263.1" width="1" height="7.7" fill="#22a622"/><rect x="593.5" y="264.4" width="2" height="3.6" fill="#1ec41e"/><rect x="594" y="264.9" width="1" height="2.6" fill="#86ff78"/><rect x="596" y="261.0" width="1" height="22.4" fill="#22a622"/><rect x="595.5" y="268.0" width="2" height="10.6" fill="#1ec41e"/><rect x="596" y="268.5" width="1" height="9.6" fill="#86ff78"/><rect x="599" y="240.0" width="1" height="38.5" fill="#22a622"/><rect x="598.5" y="265.4" width="2" height="13.2" fill="#19a819"/><rect x="599" y="265.9" width="1" height="12.2" fill="#4ae04a"/><rect x="602" y="267.0" width="1" height="48.0" fill="#22a622"/><rect x="601.5" y="265.4" width="2" height="15.9" fill="#1ec41e"/><rect x="602" y="265.9" width="1" height="14.9" fill="#86ff78"/><rect x="604" y="281.2" width="1" height="15.5" fill="#22a622"/><rect x="603.5" y="281.2" width="2" height="13.3" fill="#1ec41e"/><rect x="604" y="281.7" width="1" height="12.3" fill="#86ff78"/><rect x="607" y="292.0" width="1" height="34.0" fill="#22a622"/><rect x="606.5" y="294.6" width="2" height="22.7" fill="#1ec41e"/><rect x="607" y="295.1" width="1" height="21.7" fill="#86ff78"/><rect x="610" y="294.0" width="1" height="23.3" fill="#22a622"/><rect x="609.5" y="301.8" width="2" height="15.5" fill="#19a819"/><rect x="610" y="302.3" width="1" height="14.5" fill="#4ae04a"/><rect x="612" y="301.8" width="1" height="12.5" fill="#22a622"/><rect x="611.5" y="301.8" width="2" height="7.4" fill="#1ec41e"/><rect x="612" y="302.3" width="1" height="6.4" fill="#86ff78"/><rect x="615" y="281.0" width="1" height="29.0" fill="#22a622"/><rect x="614.5" y="298.6" width="2" height="10.6" fill="#19a819"/><rect x="615" y="299.1" width="1" height="9.6" fill="#4ae04a"/><rect x="618" y="292.9" width="1" height="9.0" fill="#22a622"/><rect x="617.5" y="294.7" width="2" height="3.8" fill="#19a819"/><rect x="618" y="295.2" width="1" height="2.8" fill="#4ae04a"/><rect x="620" y="291.5" width="1" height="17.4" fill="#22a622"/><rect x="619.5" y="294.7" width="2" height="7.9" fill="#1ec41e"/><rect x="620" y="295.2" width="1" height="6.9" fill="#86ff78"/><rect x="623" y="265.6" width="1" height="22.4" fill="#22a622"/><rect x="622.5" y="271.5" width="2" height="31.2" fill="#19a819"/><rect x="623" y="272.0" width="1" height="30.2" fill="#4ae04a"/><rect x="626" y="271.5" width="1" height="13.6" fill="#22a622"/><rect x="625.5" y="271.5" width="2" height="7.5" fill="#1ec41e"/><rect x="626" y="272.0" width="1" height="6.5" fill="#86ff78"/><rect x="628" y="276.0" width="1" height="5.0" fill="#22a622"/><rect x="627.5" y="276.7" width="2" height="2.4" fill="#19a819"/><rect x="628" y="277.2" width="1" height="1.4" fill="#4ae04a"/><rect x="631" y="268.8" width="1" height="9.4" fill="#22a622"/><rect x="630.5" y="272.4" width="2" height="4.2" fill="#19a819"/><rect x="631" y="272.9" width="1" height="3.2" fill="#4ae04a"/><rect x="634" y="270.8" width="1" height="8.0" fill="#22a622"/><rect x="633.5" y="272.4" width="2" height="6.1" fill="#1ec41e"/><rect x="634" y="272.9" width="1" height="5.1" fill="#86ff78"/><rect x="636" y="262.0" width="1" height="22.4" fill="#22a622"/><rect x="635.5" y="270.5" width="2" height="8.0" fill="#19a819"/><rect x="636" y="271.0" width="1" height="7.0" fill="#4ae04a"/><rect x="639" y="233.4" width="1" height="21.6" fill="#22a622"/><rect x="638.5" y="233.6" width="2" height="36.9" fill="#19a819"/><rect x="639" y="234.1" width="1" height="35.9" fill="#4ae04a"/><rect x="642" y="229.0" width="1" height="22.2" fill="#22a622"/><rect x="641.5" y="233.6" width="2" height="10.5" fill="#1ec41e"/><rect x="642" y="234.1" width="1" height="9.5" fill="#86ff78"/><rect x="644" y="238.9" width="1" height="6.4" fill="#22a622"/><rect x="643.5" y="239.8" width="2" height="4.3" fill="#19a819"/><rect x="644" y="240.3" width="1" height="3.3" fill="#4ae04a"/><rect x="647" y="236.4" width="1" height="12.0" fill="#22a622"/><rect x="646.5" y="239.8" width="2" height="6.2" fill="#1ec41e"/><rect x="647" y="240.3" width="1" height="5.2" fill="#86ff78"/><rect x="650" y="230.7" width="1" height="15.3" fill="#22a622"/><rect x="649.5" y="232.5" width="2" height="13.4" fill="#19a819"/><rect x="650" y="233.0" width="1" height="12.4" fill="#4ae04a"/><rect x="652" y="240.0" width="1" height="12.6" fill="#22a622"/><rect x="651.5" y="232.5" width="2" height="19.9" fill="#1ec41e"/><rect x="652" y="233.0" width="1" height="18.9" fill="#86ff78"/><rect x="655" y="246.6" width="1" height="7.7" fill="#22a622"/><rect x="654.5" y="250.0" width="2" height="2.4" fill="#19a819"/><rect x="655" y="250.5" width="1" height="1.4" fill="#4ae04a"/><rect x="658" y="246.4" width="1" height="15.7" fill="#22a622"/><rect x="657.5" y="250.0" width="2" height="10.7" fill="#1ec41e"/><rect x="658" y="250.5" width="1" height="9.7" fill="#86ff78"/><rect x="661" y="253.5" width="1" height="12.5" fill="#22a622"/><rect x="660.5" y="256.0" width="2" height="4.6" fill="#19a819"/><rect x="661" y="256.5" width="1" height="3.6" fill="#4ae04a"/><rect x="663" y="255.0" width="1" height="25.0" fill="#22a622"/><rect x="662.5" y="256.0" width="2" height="7.2" fill="#1ec41e"/><rect x="663" y="256.5" width="1" height="6.2" fill="#86ff78"/><rect x="666" y="256.8" width="1" height="11.9" fill="#22a622"/><rect x="665.5" y="258.8" width="2" height="4.4" fill="#19a819"/><rect x="666" y="259.3" width="1" height="3.4" fill="#4ae04a"/><rect x="669" y="258.8" width="1" height="11.6" fill="#22a622"/><rect x="668.5" y="258.8" width="2" height="10.0" fill="#1ec41e"/><rect x="669" y="259.3" width="1" height="9.0" fill="#86ff78"/><rect x="671" y="273.0" width="1" height="19.8" fill="#22a622"/><rect x="670.5" y="268.7" width="2" height="23.7" fill="#1ec41e"/><rect x="671" y="269.2" width="1" height="22.7" fill="#86ff78"/><rect x="674" y="273.1" width="1" height="19.6" fill="#22a622"/><rect x="673.5" y="278.3" width="2" height="14.1" fill="#19a819"/><rect x="674" y="278.8" width="1" height="13.1" fill="#4ae04a"/><rect x="677" y="277.5" width="1" height="22.5" fill="#22a622"/><rect x="676.5" y="278.3" width="2" height="15.6" fill="#1ec41e"/><rect x="677" y="278.8" width="1" height="14.6" fill="#86ff78"/><rect x="679" y="244.0" width="1" height="51.0" fill="#22a622"/><rect x="678.5" y="252.9" width="2" height="41.0" fill="#19a819"/><rect x="679" y="253.4" width="1" height="40.0" fill="#4ae04a"/><rect x="682" y="252.9" width="1" height="18.6" fill="#22a622"/><rect x="681.5" y="252.9" width="2" height="17.2" fill="#1ec41e"/><rect x="682" y="253.4" width="1" height="16.2" fill="#86ff78"/><rect x="685" y="270.0" width="1" height="5.0" fill="#22a622"/><rect x="684.5" y="270.1" width="2" height="2.2" fill="#1ec41e"/><rect x="685" y="270.6" width="1" height="1.2" fill="#86ff78"/><rect x="687" y="240.7" width="1" height="14.3" fill="#22a622"/><rect x="686.5" y="248.2" width="2" height="24.2" fill="#19a819"/><rect x="687" y="248.7" width="1" height="23.2" fill="#4ae04a"/><rect x="690" y="247.3" width="1" height="2.2" fill="#22a622"/><rect x="689.5" y="248.2" width="2" height="1.0" fill="#1ec41e"/><rect x="690" y="248.7" width="1" height="0.5" fill="#86ff78"/><rect x="693" y="242.0" width="1" height="10.4" fill="#22a622"/><rect x="692.5" y="242.2" width="2" height="7.0" fill="#19a819"/><rect x="693" y="242.7" width="1" height="6.0" fill="#4ae04a"/><rect x="695" y="238.0" width="1" height="9.2" fill="#22a622"/><rect x="694.5" y="242.2" width="2" height="4.1" fill="#1ec41e"/><rect x="695" y="242.7" width="1" height="3.1" fill="#86ff78"/><rect x="698" y="210.3" width="1" height="25.7" fill="#22a622"/><rect x="697.5" y="216.0" width="2" height="30.3" fill="#19a819"/><rect x="698" y="216.5" width="1" height="29.3" fill="#4ae04a"/><rect x="701" y="183.0" width="1" height="47.5" fill="#22a622"/><rect x="700.5" y="202.0" width="2" height="14.1" fill="#19a819"/><rect x="701" y="202.5" width="1" height="13.1" fill="#4ae04a"/><rect x="703" y="183.0" width="1" height="10.0" fill="#22a622"/><rect x="702.5" y="192.3" width="2" height="9.7" fill="#19a819"/><rect x="703" y="192.8" width="1" height="8.7" fill="#4ae04a"/><rect x="706" y="179.3" width="1" height="13.0" fill="#22a622"/><rect x="705.5" y="186.6" width="2" height="5.6" fill="#19a819"/><rect x="706" y="187.1" width="1" height="4.6" fill="#4ae04a"/><rect x="709" y="172.0" width="1" height="14.6" fill="#22a622"/><rect x="708.5" y="178.6" width="2" height="8.0" fill="#19a819"/><rect x="709" y="179.1" width="1" height="7.0" fill="#4ae04a"/><rect x="711" y="178.6" width="1" height="9.2" fill="#22a622"/><rect x="710.5" y="178.6" width="2" height="5.0" fill="#1ec41e"/><rect x="711" y="179.1" width="1" height="4.0" fill="#86ff78"/><rect x="714" y="179.4" width="1" height="10.3" fill="#22a622"/><rect x="713.5" y="183.6" width="2" height="5.9" fill="#1ec41e"/><rect x="714" y="184.1" width="1" height="4.9" fill="#86ff78"/><rect x="717" y="182.7" width="1" height="8.8" fill="#22a622"/><rect x="716.5" y="184.6" width="2" height="4.9" fill="#19a819"/><rect x="717" y="185.1" width="1" height="3.9" fill="#4ae04a"/><rect x="719" y="179.8" width="1" height="12.9" fill="#22a622"/><rect x="718.5" y="184.6" width="2" height="4.5" fill="#1ec41e"/><rect x="719" y="185.1" width="1" height="3.5" fill="#86ff78"/><rect x="722" y="186.7" width="1" height="6.4" fill="#22a622"/><rect x="721.5" y="189.1" width="2" height="2.4" fill="#1ec41e"/><rect x="722" y="189.6" width="1" height="1.4" fill="#86ff78"/><rect x="725" y="179.3" width="1" height="12.3" fill="#22a622"/><rect x="724.5" y="182.2" width="2" height="9.4" fill="#19a819"/><rect x="725" y="182.7" width="1" height="8.4" fill="#4ae04a"/><rect x="727" y="176.0" width="1" height="20.0" fill="#22a622"/><rect x="726.5" y="182.2" width="2" height="10.5" fill="#1ec41e"/><rect x="727" y="182.7" width="1" height="9.5" fill="#86ff78"/><rect x="730" y="186.0" width="1" height="6.8" fill="#22a622"/><rect x="729.5" y="186.9" width="2" height="5.9" fill="#19a819"/><rect x="730" y="187.4" width="1" height="4.9" fill="#4ae04a"/><rect x="733" y="189.0" width="1" height="9.9" fill="#22a622"/><rect x="732.5" y="186.9" width="2" height="8.8" fill="#1ec41e"/><rect x="733" y="187.4" width="1" height="7.8" fill="#86ff78"/><rect x="735" y="190.7" width="1" height="20.3" fill="#22a622"/><rect x="734.5" y="195.7" width="2" height="12.3" fill="#1ec41e"/><rect x="735" y="196.2" width="1" height="11.3" fill="#86ff78"/><rect x="738" y="200.5" width="1" height="19.5" fill="#22a622"/><rect x="737.5" y="208.0" width="2" height="9.3" fill="#1ec41e"/><rect x="738" y="208.5" width="1" height="8.3" fill="#86ff78"/><rect x="741" y="196.0" width="1" height="21.2" fill="#22a622"/><rect x="740.5" y="208.9" width="2" height="8.3" fill="#19a819"/><rect x="741" y="209.4" width="1" height="7.3" fill="#4ae04a"/><rect x="743" y="205.9" width="1" height="8.7" fill="#22a622"/><rect x="742.5" y="208.9" width="2" height="4.2" fill="#1ec41e"/><rect x="743" y="209.4" width="1" height="3.2" fill="#86ff78"/><rect x="746" y="183.2" width="1" height="12.8" fill="#22a622"/><rect x="745.5" y="189.3" width="2" height="23.9" fill="#19a819"/><rect x="746" y="189.8" width="1" height="22.9" fill="#4ae04a"/><rect x="749" y="178.0" width="1" height="15.3" fill="#22a622"/><rect x="748.5" y="184.8" width="2" height="4.5" fill="#19a819"/><rect x="749" y="185.3" width="1" height="3.5" fill="#4ae04a"/><rect x="751" y="179.2" width="1" height="11.8" fill="#22a622"/><rect x="750.5" y="184.8" width="2" height="3.9" fill="#1ec41e"/><rect x="751" y="185.3" width="1" height="2.9" fill="#86ff78"/><rect x="754" y="166.4" width="1" height="11.6" fill="#22a622"/><rect x="753.5" y="170.1" width="2" height="18.6" fill="#19a819"/><rect x="754" y="170.6" width="1" height="17.6" fill="#4ae04a"/><rect x="757" y="159.0" width="1" height="14.2" fill="#22a622"/><rect x="756.5" y="162.0" width="2" height="8.1" fill="#19a819"/><rect x="757" y="162.5" width="1" height="7.1" fill="#4ae04a"/><rect x="760" y="162.0" width="1" height="5.8" fill="#22a622"/><rect x="759.5" y="162.0" width="2" height="2.7" fill="#1ec41e"/><rect x="760" y="162.5" width="1" height="1.7" fill="#86ff78"/><rect x="762" y="156.3" width="1" height="21.3" fill="#22a622"/><rect x="761.5" y="164.7" width="2" height="7.4" fill="#1ec41e"/><rect x="762" y="165.2" width="1" height="6.4" fill="#86ff78"/><rect x="765" y="166.8" width="1" height="5.4" fill="#22a622"/><rect x="764.5" y="168.7" width="2" height="3.4" fill="#19a819"/><rect x="765" y="169.2" width="1" height="2.4" fill="#4ae04a"/><rect x="768" y="156.0" width="1" height="17.3" fill="#22a622"/><rect x="767.5" y="163.1" width="2" height="5.6" fill="#19a819"/><rect x="768" y="163.6" width="1" height="4.6" fill="#4ae04a"/><rect x="770" y="127.0" width="1" height="18.0" fill="#22a622"/><rect x="769.5" y="148.0" width="2" height="15.0" fill="#19a819"/><rect x="770" y="148.5" width="1" height="14.0" fill="#4ae04a"/><rect x="773" y="112.0" width="1" height="36.0" fill="#22a622"/><rect x="772.5" y="119.4" width="2" height="28.6" fill="#19a819"/><rect x="773" y="119.9" width="1" height="27.6" fill="#4ae04a"/><rect x="776" y="119.4" width="1" height="13.2" fill="#22a622"/><rect x="775.5" y="119.4" width="2" height="5.7" fill="#1ec41e"/><rect x="776" y="119.9" width="1" height="4.7" fill="#86ff78"/><rect x="778" y="125.1" width="1" height="8.2" fill="#22a622"/><rect x="777.5" y="125.2" width="2" height="4.4" fill="#1ec41e"/><rect x="778" y="125.7" width="1" height="3.4" fill="#86ff78"/><rect x="781" y="120.3" width="1" height="14.7" fill="#22a622"/><rect x="780.5" y="120.5" width="2" height="9.0" fill="#19a819"/><rect x="781" y="121.0" width="1" height="8.0" fill="#4ae04a"/><rect x="784" y="123.0" width="1" height="19.2" fill="#22a622"/><rect x="783.5" y="120.5" width="2" height="9.7" fill="#1ec41e"/><rect x="784" y="121.0" width="1" height="8.7" fill="#86ff78"/><rect x="786" y="130.2" width="1" height="11.1" fill="#22a622"/><rect x="785.5" y="130.2" width="2" height="10.2" fill="#1ec41e"/><rect x="786" y="130.7" width="1" height="9.2" fill="#86ff78"/><rect x="789" y="126.0" width="1" height="14.4" fill="#22a622"/><rect x="788.5" y="132.1" width="2" height="8.4" fill="#19a819"/><rect x="789" y="132.6" width="1" height="7.4" fill="#4ae04a"/><rect x="792" y="124.4" width="1" height="20.6" fill="#22a622"/><rect x="791.5" y="132.1" width="2" height="8.3" fill="#1ec41e"/><rect x="792" y="132.6" width="1" height="7.3" fill="#86ff78"/><rect x="794" y="130.9" width="1" height="17.2" fill="#22a622"/><rect x="793.5" y="132.1" width="2" height="8.2" fill="#19a819"/><rect x="794" y="132.6" width="1" height="7.2" fill="#4ae04a"/><rect x="797" y="131.2" width="1" height="24.8" fill="#22a622"/><rect x="796.5" y="132.1" width="2" height="19.4" fill="#1ec41e"/><rect x="797" y="132.6" width="1" height="18.4" fill="#86ff78"/><rect x="800" y="119.0" width="1" height="32.5" fill="#22a622"/><rect x="799.5" y="137.3" width="2" height="14.2" fill="#19a819"/><rect x="800" y="137.8" width="1" height="13.2" fill="#4ae04a"/><rect x="802" y="118.3" width="1" height="8.7" fill="#22a622"/><rect x="801.5" y="120.9" width="2" height="16.4" fill="#19a819"/><rect x="802" y="121.4" width="1" height="15.4" fill="#4ae04a"/><rect x="805" y="112.3" width="1" height="8.6" fill="#22a622"/><rect x="804.5" y="116.0" width="2" height="5.0" fill="#19a819"/><rect x="805" y="116.5" width="1" height="4.0" fill="#4ae04a"/><rect x="808" y="112.9" width="1" height="13.9" fill="#22a622"/><rect x="807.5" y="116.0" width="2" height="7.6" fill="#1ec41e"/><rect x="808" y="116.5" width="1" height="6.6" fill="#86ff78"/><rect x="810" y="116.3" width="1" height="7.3" fill="#22a622"/><rect x="809.5" y="117.4" width="2" height="6.1" fill="#19a819"/><rect x="810" y="117.9" width="1" height="5.1" fill="#4ae04a"/><rect x="813" y="116.2" width="1" height="2.1" fill="#22a622"/><rect x="812.5" y="116.4" width="2" height="1.0" fill="#19a819"/><rect x="813" y="116.9" width="1" height="0.5" fill="#4ae04a"/><rect x="816" y="110.0" width="1" height="13.8" fill="#22a622"/><rect x="815.5" y="116.4" width="2" height="5.6" fill="#1ec41e"/><rect x="816" y="116.9" width="1" height="4.6" fill="#86ff78"/><rect x="818" y="116.4" width="1" height="8.8" fill="#22a622"/><rect x="817.5" y="119.1" width="2" height="2.9" fill="#19a819"/><rect x="818" y="119.6" width="1" height="1.9" fill="#4ae04a"/><rect x="821" y="116.9" width="1" height="5.4" fill="#22a622"/><rect x="820.5" y="119.1" width="2" height="2.8" fill="#1ec41e"/><rect x="821" y="119.6" width="1" height="1.8" fill="#86ff78"/><rect x="824" y="121.9" width="1" height="16.3" fill="#22a622"/><rect x="823.5" y="121.9" width="2" height="8.3" fill="#1ec41e"/><rect x="824" y="122.4" width="1" height="7.3" fill="#86ff78"/><rect x="826" y="105.0" width="1" height="40.0" fill="#22a622"/><rect x="825.5" y="119.2" width="2" height="10.9" fill="#19a819"/><rect x="826" y="119.7" width="1" height="9.9" fill="#4ae04a"/><rect x="829" y="116.7" width="1" height="7.2" fill="#22a622"/><rect x="828.5" y="119.2" width="2" height="3.3" fill="#1ec41e"/><rect x="829" y="119.7" width="1" height="2.3" fill="#86ff78"/><rect x="832" y="115.4" width="1" height="17.8" fill="#22a622"/><rect x="831.5" y="122.6" width="2" height="8.0" fill="#1ec41e"/><rect x="832" y="123.1" width="1" height="7.0" fill="#86ff78"/><rect x="834" y="121.4" width="1" height="9.1" fill="#22a622"/><rect x="833.5" y="122.2" width="2" height="8.3" fill="#19a819"/><rect x="834" y="122.7" width="1" height="7.3" fill="#4ae04a"/><rect x="837" y="118.0" width="1" height="15.3" fill="#22a622"/><rect x="836.5" y="122.2" width="2" height="4.6" fill="#1ec41e"/><rect x="837" y="122.7" width="1" height="3.6" fill="#86ff78"/><rect x="840" y="113.0" width="1" height="23.0" fill="#22a622"/><rect x="839.5" y="115.2" width="2" height="11.6" fill="#19a819"/><rect x="840" y="115.7" width="1" height="10.6" fill="#4ae04a"/><rect x="842" y="113.0" width="1" height="7.6" fill="#22a622"/><rect x="841.5" y="115.2" width="2" height="2.5" fill="#1ec41e"/><rect x="842" y="115.7" width="1" height="1.5" fill="#86ff78"/><rect x="845" y="117.7" width="1" height="2.0" fill="#22a622"/><rect x="844.5" y="117.7" width="2" height="1.0" fill="#1ec41e"/><rect x="845" y="118.2" width="1" height="0.5" fill="#86ff78"/><rect x="848" y="115.7" width="1" height="10.8" fill="#22a622"/><rect x="847.5" y="118.6" width="2" height="3.4" fill="#1ec41e"/><rect x="848" y="119.1" width="1" height="2.4" fill="#86ff78"/><rect x="850" y="119.2" width="1" height="8.8" fill="#22a622"/><rect x="849.5" y="122.1" width="2" height="3.4" fill="#1ec41e"/><rect x="850" y="122.6" width="1" height="2.4" fill="#86ff78"/><rect x="853" y="105.0" width="1" height="19.0" fill="#22a622"/><rect x="852.5" y="109.1" width="2" height="16.4" fill="#19a819"/><rect x="853" y="109.6" width="1" height="15.4" fill="#4ae04a"/><rect x="856" y="100.0" width="1" height="24.0" fill="#22a622"/><rect x="855.5" y="109.1" width="2" height="12.4" fill="#1ec41e"/><rect x="856" y="109.6" width="1" height="11.4" fill="#86ff78"/><rect x="858" y="104.6" width="1" height="16.8" fill="#22a622"/><rect x="857.5" y="105.9" width="2" height="15.6" fill="#19a819"/><rect x="858" y="106.4" width="1" height="14.6" fill="#4ae04a"/><rect x="861" y="105.9" width="1" height="15.4" fill="#22a622"/><rect x="860.5" y="105.9" width="2" height="12.1" fill="#1ec41e"/><rect x="861" y="106.4" width="1" height="11.1" fill="#86ff78"/><rect x="864" y="121.0" width="1" height="20.8" fill="#22a622"/><rect x="863.5" y="118.0" width="2" height="17.7" fill="#1ec41e"/><rect x="864" y="118.5" width="1" height="16.7" fill="#86ff78"/><rect x="866" y="122.0" width="1" height="27.1" fill="#22a622"/><rect x="865.5" y="125.1" width="2" height="10.6" fill="#19a819"/><rect x="866" y="125.6" width="1" height="9.6" fill="#4ae04a"/><rect x="869" y="125.1" width="1" height="33.9" fill="#22a622"/><rect x="868.5" y="125.1" width="2" height="23.4" fill="#1ec41e"/><rect x="869" y="125.6" width="1" height="22.4" fill="#86ff78"/><rect x="872" y="159.0" width="1" height="22.0" fill="#22a622"/><rect x="871.5" y="148.4" width="2" height="24.3" fill="#1ec41e"/><rect x="872" y="148.9" width="1" height="23.3" fill="#86ff78"/><rect x="875" y="168.8" width="1" height="3.9" fill="#22a622"/><rect x="874.5" y="168.9" width="2" height="3.8" fill="#19a819"/><rect x="875" y="169.4" width="1" height="2.8" fill="#4ae04a"/><rect x="877" y="159.4" width="1" height="20.8" fill="#22a622"/><rect x="876.5" y="168.9" width="2" height="5.1" fill="#1ec41e"/><rect x="877" y="169.4" width="1" height="4.1" fill="#86ff78"/><rect x="880" y="162.1" width="1" height="11.9" fill="#22a622"/><rect x="879.5" y="168.5" width="2" height="5.5" fill="#19a819"/><rect x="880" y="169.0" width="1" height="4.5" fill="#4ae04a"/><rect x="883" y="144.8" width="1" height="21.2" fill="#22a622"/><rect x="882.5" y="158.4" width="2" height="10.1" fill="#19a819"/><rect x="883" y="158.9" width="1" height="9.1" fill="#4ae04a"/><rect x="885" y="148.8" width="1" height="13.4" fill="#22a622"/><rect x="884.5" y="153.0" width="2" height="5.5" fill="#19a819"/><rect x="885" y="153.5" width="1" height="4.5" fill="#4ae04a"/><rect x="888" y="140.0" width="1" height="22.1" fill="#22a622"/><rect x="887.5" y="153.0" width="2" height="9.1" fill="#1ec41e"/><rect x="888" y="153.5" width="1" height="8.1" fill="#86ff78"/><rect x="891" y="120.9" width="1" height="11.1" fill="#22a622"/><rect x="890.5" y="136.5" width="2" height="25.5" fill="#19a819"/><rect x="891" y="137.0" width="1" height="24.5" fill="#4ae04a"/><rect x="893" y="122.9" width="1" height="13.7" fill="#22a622"/><rect x="892.5" y="124.8" width="2" height="11.8" fill="#19a819"/><rect x="893" y="125.3" width="1" height="10.8" fill="#4ae04a"/><rect x="896" y="118.0" width="1" height="6.8" fill="#22a622"/><rect x="895.5" y="121.9" width="2" height="2.9" fill="#19a819"/><rect x="896" y="122.4" width="1" height="1.9" fill="#4ae04a"/><rect x="899" y="117.0" width="1" height="12.3" fill="#22a622"/><rect x="898.5" y="121.9" width="2" height="5.6" fill="#1ec41e"/><rect x="899" y="122.4" width="1" height="4.6" fill="#86ff78"/><rect x="901" y="118.2" width="1" height="9.3" fill="#22a622"/><rect x="900.5" y="119.2" width="2" height="8.3" fill="#19a819"/><rect x="901" y="119.7" width="1" height="7.3" fill="#4ae04a"/><rect x="904" y="119.2" width="1" height="5.1" fill="#22a622"/><rect x="903.5" y="119.2" width="2" height="2.6" fill="#1ec41e"/><rect x="904" y="119.7" width="1" height="1.6" fill="#86ff78"/><rect x="907" y="121.1" width="1" height="4.6" fill="#22a622"/><rect x="906.5" y="121.8" width="2" height="3.1" fill="#1ec41e"/><rect x="907" y="122.3" width="1" height="2.1" fill="#86ff78"/><rect x="909" y="113.0" width="1" height="15.2" fill="#22a622"/><rect x="908.5" y="120.4" width="2" height="4.5" fill="#19a819"/><rect x="909" y="120.9" width="1" height="3.5" fill="#4ae04a"/><rect x="912" y="128.0" width="1" height="20.5" fill="#22a622"/><rect x="911.5" y="120.4" width="2" height="15.4" fill="#1ec41e"/><rect x="912" y="120.9" width="1" height="14.4" fill="#86ff78"/><rect x="915" y="131.1" width="1" height="19.9" fill="#22a622"/><rect x="914.5" y="135.8" width="2" height="14.1" fill="#1ec41e"/><rect x="915" y="136.3" width="1" height="13.1" fill="#86ff78"/><rect x="917" y="135.0" width="1" height="14.9" fill="#22a622"/><rect x="916.5" y="143.8" width="2" height="6.1" fill="#19a819"/><rect x="917" y="144.3" width="1" height="5.1" fill="#4ae04a"/><rect x="920" y="143.0" width="1" height="13.2" fill="#22a622"/><rect x="919.5" y="143.8" width="2" height="10.5" fill="#1ec41e"/><rect x="920" y="144.3" width="1" height="9.5" fill="#86ff78"/><rect x="923" y="144.3" width="1" height="27.7" fill="#22a622"/><rect x="922.5" y="154.3" width="2" height="11.4" fill="#1ec41e"/><rect x="923" y="154.8" width="1" height="10.4" fill="#86ff78"/><rect x="925" y="154.3" width="1" height="11.3" fill="#22a622"/><rect x="924.5" y="155.9" width="2" height="9.7" fill="#19a819"/><rect x="925" y="156.4" width="1" height="8.7" fill="#4ae04a"/><rect x="928" y="149.6" width="1" height="12.5" fill="#22a622"/><rect x="927.5" y="152.2" width="2" height="3.7" fill="#19a819"/><rect x="928" y="152.7" width="1" height="2.7" fill="#4ae04a"/><rect x="931" y="159.0" width="1" height="6.9" fill="#22a622"/><rect x="930.5" y="152.2" width="2" height="8.3" fill="#1ec41e"/><rect x="931" y="152.7" width="1" height="7.3" fill="#86ff78"/><rect x="933" y="159.9" width="1" height="6.1" fill="#22a622"/><rect x="932.5" y="160.5" width="2" height="4.6" fill="#1ec41e"/><rect x="933" y="161.0" width="1" height="3.6" fill="#86ff78"/><rect x="936" y="163.1" width="1" height="6.3" fill="#22a622"/><rect x="935.5" y="165.0" width="2" height="2.4" fill="#1ec41e"/><rect x="936" y="165.5" width="1" height="1.4" fill="#86ff78"/><rect x="939" y="160.4" width="1" height="9.8" fill="#22a622"/><rect x="938.5" y="161.5" width="2" height="6.0" fill="#19a819"/><rect x="939" y="162.0" width="1" height="5.0" fill="#4ae04a"/><rect x="941" y="160.1" width="1" height="5.6" fill="#22a622"/><rect x="940.5" y="161.5" width="2" height="2.8" fill="#1ec41e"/><rect x="941" y="162.0" width="1" height="1.8" fill="#86ff78"/><rect x="944" y="161.3" width="1" height="7.8" fill="#22a622"/><rect x="943.5" y="164.2" width="2" height="2.0" fill="#1ec41e"/><rect x="944" y="164.7" width="1" height="1.0" fill="#86ff78"/><rect x="947" y="162.6" width="1" height="9.4" fill="#22a622"/><rect x="946.5" y="166.2" width="2" height="2.1" fill="#1ec41e"/><rect x="947" y="166.7" width="1" height="1.1" fill="#86ff78"/><rect x="949" y="163.7" width="1" height="4.7" fill="#22a622"/><rect x="948.5" y="164.0" width="2" height="4.4" fill="#19a819"/><rect x="949" y="164.5" width="1" height="3.4" fill="#4ae04a"/><rect x="952" y="162.4" width="1" height="3.7" fill="#22a622"/><rect x="951.5" y="164.0" width="2" height="1.1" fill="#1ec41e"/><rect x="952" y="164.5" width="1" height="0.5" fill="#86ff78"/><rect x="955" y="166.0" width="1" height="27.0" fill="#22a622"/><rect x="954.5" y="165.0" width="2" height="22.5" fill="#1ec41e"/><rect x="955" y="165.5" width="1" height="21.5" fill="#86ff78"/><rect x="957" y="167.8" width="1" height="22.4" fill="#22a622"/><rect x="956.5" y="179.3" width="2" height="8.2" fill="#19a819"/><rect x="957" y="179.8" width="1" height="7.2" fill="#4ae04a"/><rect x="960" y="174.7" width="1" height="4.7" fill="#22a622"/><rect x="959.5" y="175.7" width="2" height="3.6" fill="#19a819"/><rect x="960" y="176.2" width="1" height="2.6" fill="#4ae04a"/><rect x="963" y="175.7" width="1" height="10.6" fill="#22a622"/><rect x="962.5" y="175.7" width="2" height="9.0" fill="#1ec41e"/><rect x="963" y="176.2" width="1" height="8.0" fill="#86ff78"/><rect x="965" y="156.8" width="1" height="13.2" fill="#22a622"/><rect x="964.5" y="158.6" width="2" height="26.1" fill="#19a819"/><rect x="965" y="159.1" width="1" height="25.1" fill="#4ae04a"/><rect x="968" y="154.5" width="1" height="7.6" fill="#22a622"/><rect x="967.5" y="155.1" width="2" height="3.5" fill="#19a819"/><rect x="968" y="155.6" width="1" height="2.5" fill="#4ae04a"/><rect x="971" y="151.7" width="1" height="16.5" fill="#22a622"/><rect x="970.5" y="155.1" width="2" height="11.5" fill="#1ec41e"/><rect x="971" y="155.6" width="1" height="10.5" fill="#86ff78"/><rect x="974" y="147.0" width="1" height="19.6" fill="#22a622"/><rect x="973.5" y="156.6" width="2" height="10.0" fill="#19a819"/><rect x="974" y="157.1" width="1" height="9.0" fill="#4ae04a"/><rect x="976" y="166.0" width="1" height="17.0" fill="#22a622"/><rect x="975.5" y="156.6" width="2" height="21.1" fill="#1ec41e"/><rect x="976" y="157.1" width="1" height="20.1" fill="#86ff78"/><rect x="979" y="172.3" width="1" height="8.9" fill="#22a622"/><rect x="978.5" y="173.4" width="2" height="4.4" fill="#19a819"/><rect x="979" y="173.9" width="1" height="3.4" fill="#4ae04a"/><rect x="982" y="167.9" width="1" height="7.7" fill="#22a622"/><rect x="981.5" y="169.7" width="2" height="3.7" fill="#19a819"/><rect x="982" y="170.2" width="1" height="2.7" fill="#4ae04a"/><rect x="984" y="166.6" width="1" height="15.5" fill="#22a622"/><rect x="983.5" y="169.7" width="2" height="9.4" fill="#1ec41e"/><rect x="984" y="170.2" width="1" height="8.4" fill="#86ff78"/><rect x="987" y="171.1" width="1" height="8.0" fill="#22a622"/><rect x="986.5" y="171.6" width="2" height="7.5" fill="#19a819"/><rect x="987" y="172.1" width="1" height="6.5" fill="#4ae04a"/><rect x="990" y="168.0" width="1" height="8.0" fill="#22a622"/><rect x="989.5" y="171.6" width="2" height="3.4" fill="#1ec41e"/><rect x="990" y="172.1" width="1" height="2.4" fill="#86ff78"/><rect x="992" y="170.0" width="1" height="8.8" fill="#22a622"/><rect x="991.5" y="172.8" width="2" height="2.1" fill="#19a819"/><rect x="992" y="173.3" width="1" height="1.1" fill="#4ae04a"/><rect x="995" y="170.2" width="1" height="6.7" fill="#22a622"/><rect x="994.5" y="172.8" width="2" height="3.2" fill="#1ec41e"/><rect x="995" y="173.3" width="1" height="2.2" fill="#86ff78"/><rect x="998" y="171.0" width="1" height="5.1" fill="#22a622"/><rect x="997.5" y="174.0" width="2" height="2.0" fill="#19a819"/><rect x="998" y="174.5" width="1" height="1.0" fill="#4ae04a"/><rect x="1000" y="170.6" width="1" height="9.0" fill="#22a622"/><rect x="999.5" y="174.0" width="2" height="3.1" fill="#1ec41e"/><rect x="1000" y="174.5" width="1" height="2.1" fill="#86ff78"/><rect x="1003" y="169.5" width="1" height="11.5" fill="#22a622"/><rect x="1002.5" y="173.6" width="2" height="3.5" fill="#19a819"/><rect x="1003" y="174.1" width="1" height="2.5" fill="#4ae04a"/><rect x="1006" y="171.0" width="1" height="4.1" fill="#22a622"/><rect x="1005.5" y="171.7" width="2" height="2.0" fill="#19a819"/><rect x="1006" y="172.2" width="1" height="1.0" fill="#4ae04a"/><rect x="1008" y="181.0" width="1" height="31.4" fill="#22a622"/><rect x="1007.5" y="171.7" width="2" height="36.7" fill="#1ec41e"/><rect x="1008" y="172.2" width="1" height="35.7" fill="#86ff78"/><rect x="1011" y="181.3" width="1" height="28.9" fill="#22a622"/><rect x="1010.5" y="191.7" width="2" height="16.6" fill="#19a819"/><rect x="1011" y="192.2" width="1" height="15.6" fill="#4ae04a"/><rect x="1014" y="191.7" width="1" height="31.3" fill="#22a622"/><rect x="1013.5" y="191.7" width="2" height="18.3" fill="#1ec41e"/><rect x="1014" y="192.2" width="1" height="17.3" fill="#86ff78"/><rect x="1016" y="219.0" width="1" height="19.5" fill="#22a622"/><rect x="1015.5" y="210.0" width="2" height="26.0" fill="#1ec41e"/><rect x="1016" y="210.5" width="1" height="25.0" fill="#86ff78"/><rect x="1019" y="223.2" width="1" height="15.1" fill="#22a622"/><rect x="1018.5" y="230.3" width="2" height="5.7" fill="#19a819"/><rect x="1019" y="230.8" width="1" height="4.7" fill="#4ae04a"/><rect x="1022" y="220.6" width="1" height="25.4" fill="#22a622"/><rect x="1021.5" y="225.3" width="2" height="5.0" fill="#19a819"/><rect x="1022" y="225.8" width="1" height="4.0" fill="#4ae04a"/><rect x="1024" y="227.0" width="1" height="29.0" fill="#22a622"/><rect x="1023.5" y="225.3" width="2" height="25.5" fill="#1ec41e"/><rect x="1024" y="225.8" width="1" height="24.5" fill="#86ff78"/><rect x="1027" y="227.0" width="1" height="112.0" fill="#22a622"/><rect x="1026.5" y="256.0" width="2" height="64.0" fill="#1ec41e"/><rect x="1027" y="256.5" width="1" height="63.0" fill="#86ff78"/></svg><div class="b" style="left:1244px;top:103px;width:3px;height:1px;background:#c8c8c8"></div><div class="t" style="left:1249px;top:99.27px;font-size:9.2px;color:#e0e0e0;transform:scaleX(0.9082);transform-origin:0 0;-webkit-text-stroke:0;">0.71755</div><div class="b" style="left:1244px;top:137px;width:3px;height:1px;background:#c8c8c8"></div><div class="t" style="left:1249px;top:133.84px;font-size:9.2px;color:#e0e0e0;transform:scaleX(0.9082);transform-origin:0 0;-webkit-text-stroke:0;">0.71725</div><div class="b" style="left:1244px;top:172px;width:3px;height:1px;background:#c8c8c8"></div><div class="t" style="left:1249px;top:168.41px;font-size:9.2px;color:#e0e0e0;transform:scaleX(0.9082);transform-origin:0 0;-webkit-text-stroke:0;">0.71695</div><div class="b" style="left:1244px;top:206px;width:3px;height:1px;background:#c8c8c8"></div><div class="t" style="left:1249px;top:202.98px;font-size:9.2px;color:#e0e0e0;transform:scaleX(0.9082);transform-origin:0 0;-webkit-text-stroke:0;">0.71665</div><div class="b" style="left:1244px;top:241px;width:3px;height:1px;background:#c8c8c8"></div><div class="t" style="left:1249px;top:237.55px;font-size:9.2px;color:#e0e0e0;transform:scaleX(0.9082);transform-origin:0 0;-webkit-text-stroke:0;">0.71635</div><div class="b" style="left:1244px;top:275px;width:3px;height:1px;background:#c8c8c8"></div><div class="t" style="left:1249px;top:272.12px;font-size:9.2px;color:#e0e0e0;transform:scaleX(0.9082);transform-origin:0 0;-webkit-text-stroke:0;">0.71605</div><div class="b" style="left:1244px;top:310px;width:3px;height:1px;background:#c8c8c8"></div><div class="t" style="left:1249px;top:306.69px;font-size:9.2px;color:#e0e0e0;transform:scaleX(0.9082);transform-origin:0 0;-webkit-text-stroke:0;">0.71575</div><div class="b" style="left:1244px;top:344px;width:3px;height:1px;background:#c8c8c8"></div><div class="t" style="left:1249px;top:341.26px;font-size:9.2px;color:#e0e0e0;transform:scaleX(0.9082);transform-origin:0 0;-webkit-text-stroke:0;">0.71545</div><div class="b" style="left:1244px;top:379px;width:3px;height:1px;background:#c8c8c8"></div><div class="t" style="left:1249px;top:375.83px;font-size:9.2px;color:#e0e0e0;transform:scaleX(0.9082);transform-origin:0 0;-webkit-text-stroke:0;">0.71515</div><div class="b" style="left:1244px;top:414px;width:3px;height:1px;background:#c8c8c8"></div><div class="t" style="left:1249px;top:410.40px;font-size:9.2px;color:#e0e0e0;transform:scaleX(0.9082);transform-origin:0 0;-webkit-text-stroke:0;">0.71485</div><div class="b" style="left:1244px;top:448px;width:3px;height:1px;background:#c8c8c8"></div><div class="t" style="left:1249px;top:444.97px;font-size:9.2px;color:#e0e0e0;transform:scaleX(0.9082);transform-origin:0 0;-webkit-text-stroke:0;">0.71455</div><div class="b" style="left:1244px;top:483px;width:3px;height:1px;background:#c8c8c8"></div><div class="t" style="left:1249px;top:479.54px;font-size:9.2px;color:#e0e0e0;transform:scaleX(0.9082);transform-origin:0 0;-webkit-text-stroke:0;">0.71425</div><div class="b" style="left:1244px;top:517px;width:3px;height:1px;background:#c8c8c8"></div><div class="t" style="left:1249px;top:514.11px;font-size:9.2px;color:#e0e0e0;transform:scaleX(0.9082);transform-origin:0 0;-webkit-text-stroke:0;">0.71395</div><div class="b" style="left:1244px;top:552px;width:3px;height:1px;background:#c8c8c8"></div><div class="t" style="left:1249px;top:548.68px;font-size:9.2px;color:#e0e0e0;transform:scaleX(0.9082);transform-origin:0 0;-webkit-text-stroke:0;">0.71365</div><div class="b" style="left:1245px;top:315px;width:38px;height:9px;background:#ffffff"></div><div class="t" style="left:1249px;top:314.87px;font-size:9.2px;color:#000;transform:scaleX(0.9082);transform-origin:0 0;-webkit-text-stroke:0;">0.71567</div><div class="t" style="left:189.5px;top:573.13px;font-size:8.7px;color:#e0e0e0;transform:scaleX(0.9460);transform-origin:0 0;-webkit-text-stroke:0;">5 Mar 2021</div><div class="b" style="left:254px;top:569px;width:1px;height:4px;background:#c8c8c8"></div><div class="t" style="left:253.5px;top:573.13px;font-size:8.7px;color:#e0e0e0;transform:scaleX(0.9460);transform-origin:0 0;-webkit-text-stroke:0;">5 Mar 19:07</div><div class="b" style="left:318px;top:569px;width:1px;height:4px;background:#c8c8c8"></div><div class="t" style="left:317.5px;top:573.13px;font-size:8.7px;color:#e0e0e0;transform:scaleX(0.9460);transform-origin:0 0;-webkit-text-stroke:0;">5 Mar 19:31</div><div class="b" style="left:383px;top:569px;width:1px;height:4px;background:#c8c8c8"></div><div class="t" style="left:382.5px;top:573.13px;font-size:8.7px;color:#e0e0e0;transform:scaleX(0.9460);transform-origin:0 0;-webkit-text-stroke:0;">5 Mar 19:55</div><div class="b" style="left:447px;top:569px;width:1px;height:4px;background:#c8c8c8"></div><div class="t" style="left:446.5px;top:573.13px;font-size:8.7px;color:#e0e0e0;transform:scaleX(0.9460);transform-origin:0 0;-webkit-text-stroke:0;">5 Mar 20:19</div><div class="b" style="left:511px;top:569px;width:1px;height:4px;background:#c8c8c8"></div><div class="t" style="left:510.5px;top:573.13px;font-size:8.7px;color:#e0e0e0;transform:scaleX(0.9460);transform-origin:0 0;-webkit-text-stroke:0;">5 Mar 20:43</div><div class="b" style="left:575px;top:569px;width:1px;height:4px;background:#c8c8c8"></div><div class="t" style="left:574.5px;top:573.13px;font-size:8.7px;color:#e0e0e0;transform:scaleX(0.9460);transform-origin:0 0;-webkit-text-stroke:0;">5 Mar 21:07</div><div class="b" style="left:639px;top:569px;width:1px;height:4px;background:#c8c8c8"></div><div class="t" style="left:638.5px;top:573.13px;font-size:8.7px;color:#e0e0e0;transform:scaleX(0.9460);transform-origin:0 0;-webkit-text-stroke:0;">5 Mar 21:31</div><div class="b" style="left:704px;top:569px;width:1px;height:4px;background:#c8c8c8"></div><div class="t" style="left:703.5px;top:573.13px;font-size:8.7px;color:#e0e0e0;transform:scaleX(0.9460);transform-origin:0 0;-webkit-text-stroke:0;">5 Mar 21:55</div><div class="b" style="left:768px;top:569px;width:1px;height:4px;background:#c8c8c8"></div><div class="t" style="left:767.5px;top:573.13px;font-size:8.7px;color:#e0e0e0;transform:scaleX(0.9460);transform-origin:0 0;-webkit-text-stroke:0;">5 Mar 22:19</div><div class="b" style="left:832px;top:569px;width:1px;height:4px;background:#c8c8c8"></div><div class="t" style="left:831.5px;top:573.13px;font-size:8.7px;color:#e0e0e0;transform:scaleX(0.9460);transform-origin:0 0;-webkit-text-stroke:0;">5 Mar 22:43</div><div class="b" style="left:896px;top:569px;width:1px;height:4px;background:#c8c8c8"></div><div class="t" style="left:895.5px;top:573.13px;font-size:8.7px;color:#e0e0e0;transform:scaleX(0.9460);transform-origin:0 0;-webkit-text-stroke:0;">5 Mar 23:07</div><div class="b" style="left:960px;top:569px;width:1px;height:4px;background:#c8c8c8"></div><div class="t" style="left:959.5px;top:573.13px;font-size:8.7px;color:#e0e0e0;transform:scaleX(0.9460);transform-origin:0 0;-webkit-text-stroke:0;">5 Mar 23:31</div><div class="b" style="left:1025px;top:569px;width:1px;height:4px;background:#c8c8c8"></div><div class="t" style="left:1024.5px;top:573.13px;font-size:8.7px;color:#e0e0e0;transform:scaleX(0.9460);transform-origin:0 0;-webkit-text-stroke:0;">5 Mar 23:55</div><svg class="b" style="left:192px;top:77.5px;" width="6" height="5" viewBox="0 0 6 5"><path d="M0 0H6L3 4z" fill="#eee"/></svg><div class="t" style="left:202.2px;top:76.73px;font-size:8.25px;color:#c8d0e0;transform:scaleX(0.9018);transform-origin:0 0;-webkit-text-stroke:0;">NZDUSD,M1</div><div class="t" style="left:252px;top:76.73px;font-size:8.25px;color:#e8e8e8;transform:scaleX(0.9994);transform-origin:0 0;-webkit-text-stroke:0;">0.71622</div><div class="t" style="left:285.5px;top:76.73px;font-size:8.25px;color:#e8e8e8;transform:scaleX(0.9994);transform-origin:0 0;-webkit-text-stroke:0;">0.71622</div><div class="t" style="left:319px;top:76.73px;font-size:8.25px;color:#e8e8e8;transform:scaleX(0.9994);transform-origin:0 0;-webkit-text-stroke:0;">0.71550</div><div class="t" style="left:351.5px;top:76.73px;font-size:8.25px;color:#e8e8e8;transform:scaleX(0.9994);transform-origin:0 0;-webkit-text-stroke:0;">0.71567</div><div class="t" style="left:196px;top:185.72px;font-size:8.6px;color:#d8d8d8;transform:scaleX(0.9976);transform-origin:0 0;-webkit-text-stroke:0;">#412207438 buy 0.01</div><div class="t" style="left:196px;top:347.72px;font-size:8.6px;color:#d8d8d8;transform:scaleX(0.9976);transform-origin:0 0;-webkit-text-stroke:0;">#412215698 buy 0.01</div><div class="t" style="left:196px;top:411.72px;font-size:8.6px;color:#d8d8d8;transform:scaleX(0.9976);transform-origin:0 0;-webkit-text-stroke:0;">#412235090 buy 0.01</div><div class="t" style="left:196px;top:425.72px;font-size:8.6px;color:#d8d8d8;transform:scaleX(1.0053);transform-origin:0 0;-webkit-text-stroke:0;">#412114400 buy 0.01</div><div class="t" style="left:1193px;top:77.56px;font-size:8.0px;color:#e0e0e0;-webkit-text-stroke:0;">SkyUp EA</div><svg class="b" style="left:1231.5px;top:76.5px;" width="10" height="10" viewBox="0 0 10 10"><circle cx="5" cy="5" r="4.3" fill="none" stroke="#ddd" stroke-width="1"/><circle cx="3.5" cy="4" r="0.6" fill="#ddd"/><circle cx="6.5" cy="4" r="0.6" fill="#ddd"/><path d="M2.8 6 Q5 8 7.2 6" stroke="#ddd" fill="none" stroke-width="0.8"/></svg><div class="b" style="left:1097px;top:87px;width:134px;height:150px;background:#000;border:1px solid #c8c8c8;box-sizing:border-box"></div><div class="t" style="left:1097px;width:134px;text-align:center;top:90px;font-size:8.3px;color:#e6e6e6">WWW.MFOREX.PRO</div><div class="b" style="left:1100px;top:100px;width:127px;height:1px;background:#c8c8c8"></div><div class="b" style="left:1100px;top:113.5px;width:127px;height:1px;background:#c8c8c8"></div><div class="b" style="left:1100px;top:158.5px;width:127px;height:1px;background:#c8c8c8"></div><div class="b" style="left:1100px;top:170.5px;width:127px;height:1px;background:#c8c8c8"></div><div class="t" style="left:1100px;top:103.99px;font-size:8.3px;color:#3f7ee0;-webkit-text-stroke:0;">Account information</div><div class="t" style="left:1100px;top:160.99px;font-size:8.3px;color:#3f7ee0;-webkit-text-stroke:0;">Profit on account</div><div class="t" style="left:1100px;top:118.49px;font-size:8.3px;color:#e6e6e6;-webkit-text-stroke:0;">Minimum stop:</div><div class="t" style="left:1187px;top:118.49px;font-size:8.3px;color:#3f7ee0;-webkit-text-stroke:0;">0</div><div class="t" style="left:1100px;top:128.49px;font-size:8.3px;color:#e6e6e6;-webkit-text-stroke:0;">Average bar:</div><div class="t" style="left:1187px;top:128.49px;font-size:8.3px;color:#3f7ee0;-webkit-text-stroke:0;">25</div><div class="t" style="left:1100px;top:138.49px;font-size:8.3px;color:#e6e6e6;-webkit-text-stroke:0;">Balanse:</div><div class="t" style="left:1187px;top:138.49px;font-size:8.3px;color:#3f7ee0;-webkit-text-stroke:0;">1064.29</div><div class="t" style="left:1100px;top:148.49px;font-size:8.3px;color:#e6e6e6;-webkit-text-stroke:0;">Equity:</div><div class="t" style="left:1187px;top:148.49px;font-size:8.3px;color:#3f7ee0;-webkit-text-stroke:0;">1064.29</div><div class="t" style="left:1100px;top:174.49px;font-size:8.3px;color:#e6e6e6;-webkit-text-stroke:0;">Profit on pair:</div><div class="t" style="left:1187px;top:174.49px;font-size:8.3px;color:#3f7ee0;-webkit-text-stroke:0;">0.00</div><div class="t" style="left:1100px;top:184.54px;font-size:8.3px;color:#e6e6e6;-webkit-text-stroke:0;">Total profit:</div><div class="t" style="left:1187px;top:184.54px;font-size:8.3px;color:#3f7ee0;-webkit-text-stroke:0;">0.00</div><div class="t" style="left:1100px;top:194.59px;font-size:8.3px;color:#e6e6e6;-webkit-text-stroke:0;">Profit for today:</div><div class="t" style="left:1187px;top:194.59px;font-size:8.3px;color:#3f7ee0;-webkit-text-stroke:0;">0.00</div><div class="t" style="left:1100px;top:204.64px;font-size:8.3px;color:#e6e6e6;-webkit-text-stroke:0;">Profit for yesterday:</div><div class="t" style="left:1187px;top:204.64px;font-size:8.3px;color:#3f7ee0;-webkit-text-stroke:0;">0.00</div><div class="t" style="left:1100px;top:214.69px;font-size:8.3px;color:#e6e6e6;-webkit-text-stroke:0;">Profit for week:</div><div class="t" style="left:1187px;top:214.69px;font-size:8.3px;color:#3f7ee0;-webkit-text-stroke:0;">0.00</div><div class="t" style="left:1100px;top:224.74px;font-size:8.3px;color:#e6e6e6;-webkit-text-stroke:0;">Profit for month:</div><div class="t" style="left:1187px;top:224.74px;font-size:8.3px;color:#3f7ee0;-webkit-text-stroke:0;">0.00</div><div class="b" style="left:1097px;top:237px;width:67px;height:14px;background:#0a0aff"></div><div class="b" style="left:1165px;top:237px;width:66px;height:14px;background:#f01030"></div><div class="t" style="left:1101px;top:241.22px;font-size:8.6px;color:#e8e8ff;-webkit-text-stroke:0;">BUY</div><div class="t" style="left:1141px;top:241.22px;font-size:8.6px;color:#e8e8ff;-webkit-text-stroke:0;">0.01</div><div class="t" style="left:1168px;top:241.22px;font-size:8.6px;color:#ffe8e8;-webkit-text-stroke:0;">SELL</div><div class="t" style="left:1210px;top:241.22px;font-size:8.6px;color:#ffe8e8;-webkit-text-stroke:0;">0.01</div><div class="b" style="left:187px;top:586px;width:1101px;height:21px;background:#f0f0f0"></div><div class="b" style="left:187px;top:586px;width:1101px;height:1px;background:#d8d8d8"></div><div class="b" style="left:191px;top:586px;width:76px;height:17px;background:#fff;border:1px solid #777;border-top:none;box-sizing:border-box"></div><div class="t" style="left:200.5px;top:590.45px;font-size:9.45px;color:#333;">NZDUSD,M1</div><div class="t" style="left:275px;top:590.58px;font-size:9.3px;color:#888;">GBPUSD,M1</div><div class="t" style="left:347px;top:590.58px;font-size:9.3px;color:#888;">AUDUSD,M1</div><div class="t" style="left:423px;top:590.58px;font-size:9.3px;color:#888;">EURUSD,M1</div><div class="b" style="left:339px;top:589px;width:1px;height:11px;background:#999"></div><div class="b" style="left:413px;top:589px;width:1px;height:11px;background:#999"></div><div class="b" style="left:486px;top:589px;width:1px;height:11px;background:#999"></div><svg class="b" style="left:1259px;top:590px;" width="6" height="8" viewBox="0 0 6 8"><path d="M5 0.5L1.5 4L5 7.5z" fill="#aaa"/></svg><svg class="b" style="left:1275px;top:590px;" width="6" height="8" viewBox="0 0 6 8"><path d="M1 0.5L4.5 4L1 7.5z" fill="#aaa"/></svg><div class="b" style="left:8px;top:602.5px;width:1280px;height:1px;background:#dcdcdc"></div><div class="b" style="left:8px;top:607px;width:1280px;height:50px;background:#f0f0f0"></div><div class="b" style="left:8px;top:616px;width:8px;height:37px;background:#d5e0ec"></div><div class="b" style="left:16.5px;top:607px;width:1px;height:29px;background:#cfcfcf"></div><svg class="b" style="left:7.5px;top:608px;" width="6" height="6" viewBox="0 0 6 6"><path d="M0.8 0.8L5.2 5.2M5.2 0.8L0.8 5.2" stroke="#222" stroke-width="1.1"/></svg><div class="t" style="left:7px;top:651px;font-size:9.5px;color:#334;transform:rotate(-90deg);transform-origin:0 0">Термин</div><div class="b" style="left:17px;top:607px;width:1269px;height:29px;background:#fff"></div><div class="b" style="left:16px;top:625.5px;width:1270px;height:1px;background:#e4e4e4"></div><div class="b" style="left:1269.5px;top:607px;width:16.5px;height:29px;background:#efefef"></div><div class="b" style="left:141px;top:607px;width:1px;height:29px;background:#e6e6e6"></div><div class="b" style="left:313px;top:607px;width:1px;height:29px;background:#e6e6e6"></div><div class="b" style="left:398px;top:607px;width:1px;height:29px;background:#e6e6e6"></div><div class="b" style="left:466px;top:607px;width:1px;height:29px;background:#e6e6e6"></div><div class="b" style="left:550px;top:607px;width:1px;height:29px;background:#e6e6e6"></div><div class="b" style="left:647px;top:607px;width:1px;height:29px;background:#e6e6e6"></div><div class="b" style="left:741px;top:607px;width:1px;height:29px;background:#e6e6e6"></div><div class="b" style="left:837px;top:607px;width:1px;height:29px;background:#e6e6e6"></div><div class="b" style="left:932px;top:607px;width:1px;height:29px;background:#e6e6e6"></div><div class="b" style="left:1026px;top:607px;width:1px;height:29px;background:#e6e6e6"></div><div class="b" style="left:1122px;top:607px;width:1px;height:29px;background:#e6e6e6"></div><div class="t" style="left:21px;top:612.31px;font-size:9.6px;color:#333;">Ордер</div><div class="t" style="right:982px;top:612.31px;font-size:9.6px;color:#333;">Время</div><div class="t" style="right:897px;top:612.31px;font-size:9.6px;color:#333;">Тип</div><div class="t" style="right:830px;top:612.31px;font-size:9.6px;color:#333;">Объем</div><div class="t" style="right:744px;top:612.31px;font-size:9.6px;color:#333;">Символ</div><div class="t" style="right:650px;top:612.31px;font-size:9.6px;color:#333;">Цена</div><div class="t" style="right:555px;top:612.31px;font-size:9.6px;color:#333;">S / L</div><div class="t" style="right:459px;top:612.31px;font-size:9.6px;color:#333;">T / P</div><div class="t" style="right:365px;top:612.31px;font-size:9.6px;color:#333;">Цена</div><div class="t" style="right:270px;top:612.31px;font-size:9.6px;color:#333;">Комиссия</div><div class="t" style="right:175px;top:612.31px;font-size:9.6px;color:#333;">Своп</div><div class="t" style="right:40px;top:612.31px;font-size:9.6px;color:#333;">Прибыль</div><svg class="b" style="left:1258px;top:613px;" width="8" height="8" viewBox="0 0 8 8"><path d="M1 1.5H7M1.5 1.5L4 5.5" stroke="#999" stroke-width="0.8" fill="none"/></svg><svg class="b" style="left:1273px;top:612px;" width="8" height="6" viewBox="0 0 8 6"><path d="M1 5L4 1.8L7 5" stroke="#333" stroke-width="1.3" fill="none"/></svg><svg class="b" style="left:1273px;top:625px;" width="8" height="6" viewBox="0 0 8 6"><path d="M1 1L4 4.2L7 1" stroke="#333" stroke-width="1.3" fill="none"/></svg><div class="b" style="left:16px;top:626px;width:1255px;height:9px;overflow:hidden"><svg class="b" style="left:5px;top:1px" width="10" height="10" viewBox="0 0 10 10"><path d="M1 0.5h5l3 3v6.5H1z" fill="#fff" stroke="#666" stroke-width="0.8"/></svg><div class="t" style="left:19px;top:1.6px;font-size:9.6px;color:#333">412114400</div><div class="t" style="right:961px;top:1.6px;font-size:9.6px;color:#333">2021.03.05 10:08:36</div><div class="t" style="right:876px;top:1.6px;font-size:9.6px;color:#333">buy</div><div class="t" style="right:809px;top:1.6px;font-size:9.6px;color:#333">0.01</div><div class="t" style="right:723px;top:1.6px;font-size:9.6px;color:#333">nzdusd</div><div class="t" style="right:629px;top:1.6px;font-size:9.6px;color:#333">0.71467</div><div class="t" style="right:534px;top:1.6px;font-size:9.6px;color:#333">0.00000</div><div class="t" style="right:438px;top:1.6px;font-size:9.6px;color:#333">0.00000</div><div class="t" style="right:344px;top:1.6px;font-size:9.6px;color:#333">0.71567</div><div class="t" style="right:249px;top:1.6px;font-size:9.6px;color:#333">-0.07</div><div class="t" style="right:154px;top:1.6px;font-size:9.6px;color:#333">-0.02</div><div class="t" style="right:21px;top:1.6px;font-size:9.6px;color:#333">1.00</div><svg class="b" style="left:1240px;top:2.5px" width="10" height="10" viewBox="0 0 10 10"><path d="M1 1L9 8M9 1L1 8" stroke="#888" stroke-width="1.1"/></svg></div><div class="b" style="left:16px;top:635px;width:1270px;height:1px;background:#777"></div><div class="b" style="left:19px;top:635px;width:60px;height:18px;background:#fff;border:1px solid #777;border-top:none;box-sizing:border-box"></div><div class="t" style="left:28px;top:638.77px;font-size:10.2px;color:#222;">Торговля</div><div class="t" style="left:88px;top:638.77px;font-size:10.2px;color:#8a8a8a;">Активы</div><div class="t" style="left:139px;top:638.77px;font-size:10.2px;color:#8a8a8a;">История Счета</div><div class="t" style="left:223.5px;top:638.77px;font-size:10.2px;color:#8a8a8a;">Новости</div><div class="t" style="left:286px;top:638.77px;font-size:10.2px;color:#8a8a8a;">Алерты</div><div class="t" style="left:338px;top:638.77px;font-size:10.2px;color:#8a8a8a;">Почта</div><div class="t" style="left:383px;top:638.77px;font-size:10.2px;color:#8a8a8a;">Маркет</div><div class="t" style="left:433px;top:638.77px;font-size:10.2px;color:#8a8a8a;">Сигналы</div><div class="t" style="left:491px;top:638.77px;font-size:10.2px;color:#8a8a8a;">Статьи</div><div class="t" style="left:558.5px;top:638.77px;font-size:10.2px;color:#8a8a8a;">Библиотека</div><div class="t" style="left:630.5px;top:638.77px;font-size:10.2px;color:#8a8a8a;">Эксперты</div><div class="t" style="left:691px;top:638.77px;font-size:10.2px;color:#8a8a8a;">Журнал</div><div class="b" style="left:130px;top:639px;width:1px;height:11px;background:#a0a0a0"></div><div class="b" style="left:215px;top:639px;width:1px;height:11px;background:#a0a0a0"></div><div class="b" style="left:278.5px;top:639px;width:1px;height:11px;background:#a0a0a0"></div><div class="b" style="left:329.5px;top:639px;width:1px;height:11px;background:#a0a0a0"></div><div class="b" style="left:374.5px;top:639px;width:1px;height:11px;background:#a0a0a0"></div><div class="b" style="left:425.5px;top:639px;width:1px;height:11px;background:#a0a0a0"></div><div class="b" style="left:482px;top:639px;width:1px;height:11px;background:#a0a0a0"></div><div class="b" style="left:552px;top:639px;width:1px;height:11px;background:#a0a0a0"></div><div class="b" style="left:622px;top:639px;width:1px;height:11px;background:#a0a0a0"></div><div class="b" style="left:682px;top:639px;width:1px;height:11px;background:#a0a0a0"></div><div class="b" style="left:735px;top:639px;width:1px;height:11px;background:#a0a0a0"></div><div class="t" style="left:263.5px;top:642.76px;font-size:8px;color:#d02020;font-weight:bold">8</div><div class="t" style="left:523px;top:642.76px;font-size:8px;color:#d02020;font-weight:bold">1012</div><div class="b" style="left:8px;top:657px;width:1280px;height:1px;background:#c4c4c4"></div><div class="b" style="left:8px;top:658px;width:1280px;height:15px;background:#f0f0f0"></div><div class="b" style="left:703.5px;top:658px;width:1px;height:15px;background:#d0d0d0"></div><div class="b" style="left:803px;top:658px;width:1px;height:15px;background:#d0d0d0"></div><div class="b" style="left:891.5px;top:658px;width:1px;height:15px;background:#d0d0d0"></div><div class="b" style="left:951px;top:658px;width:1px;height:15px;background:#d0d0d0"></div><div class="b" style="left:1010.5px;top:658px;width:1px;height:15px;background:#d0d0d0"></div><div class="b" style="left:1067px;top:658px;width:1px;height:15px;background:#d0d0d0"></div><div class="b" style="left:1125px;top:658px;width:1px;height:15px;background:#d0d0d0"></div><div class="b" style="left:1181px;top:658px;width:1px;height:15px;background:#d0d0d0"></div><div class="t" style="left:7px;top:663.54px;font-size:9.9px;color:#333;">Для вызова справки нажмите F1</div><div class="t" style="left:708px;top:663.54px;font-size:9.9px;color:#333;">Default</div><div class="t" style="left:806.5px;top:663.54px;font-size:9.9px;color:#333;">2021.03.05 19:21</div><div class="t" style="left:895px;top:663.54px;font-size:9.9px;color:#333;">O: 0.71411</div><div class="t" style="left:955px;top:663.54px;font-size:9.9px;color:#333;">H: 0.71423</div><div class="t" style="left:1014px;top:663.54px;font-size:9.9px;color:#333;">L: 0.71408</div><div class="t" style="left:1071.5px;top:663.54px;font-size:9.9px;color:#333;">C: 0.71420</div><div class="t" style="left:1130px;top:663.54px;font-size:9.9px;color:#333;">V: 107</div><div class="t" style="left:1210px;top:663.54px;font-size:9.9px;color:#333;">99/5 kb</div><svg class="b" style="left:1186px;top:662px;" width="21" height="11" viewBox="0 0 21 11"><rect x="0" y="0" width="21" height="5" fill="#7f9f25"/><rect x="0" y="5" width="21" height="6" fill="#1f5683"/><path d="M0 9L21 3" stroke="#e8f0d0" stroke-width="0.8"/><rect x="2.2" y="0" width="0.9" height="11" fill="#f0f0f0"/><rect x="5.2" y="0" width="0.9" height="11" fill="#f0f0f0"/><rect x="8.2" y="0" width="0.9" height="11" fill="#f0f0f0"/><rect x="11.2" y="0" width="0.9" height="11" fill="#f0f0f0"/><rect x="14.2" y="0" width="0.9" height="11" fill="#f0f0f0"/><rect x="17.2" y="0" width="0.9" height="11" fill="#f0f0f0"/><rect x="20.2" y="0" width="0.9" height="11" fill="#f0f0f0"/></svg><div class="b" style="left:168px;top:551px;width:355px;height:73px;border:5px solid #e2222a;box-sizing:border-box"></div><svg class="b" style="left:420px;top:420px;" width="120" height="130" viewBox="0 0 120 130"><path d="M107.5 41.5 L16.5 119.5" stroke="#e2222a" stroke-width="4.2" stroke-linecap="round"/><path d="M22 102 L16 120 L35 121.5" stroke="#e2222a" stroke-width="4.2" fill="none" stroke-linecap="round" stroke-linejoin="round"/></svg><div class="t" style="left:535.5px;top:424.91px;font-size:27.5px;color:#e2222a;transform:scaleX(0.9846);transform-origin:0 0;font-weight:bold">Pairs Name</div><div class="b" style="left:0px;top:673px;width:1292px;height:10px;background:#212121"></div><div class="b" style="left:1288px;top:0px;width:4px;height:683px;background:#212121"></div></div></body></html>
